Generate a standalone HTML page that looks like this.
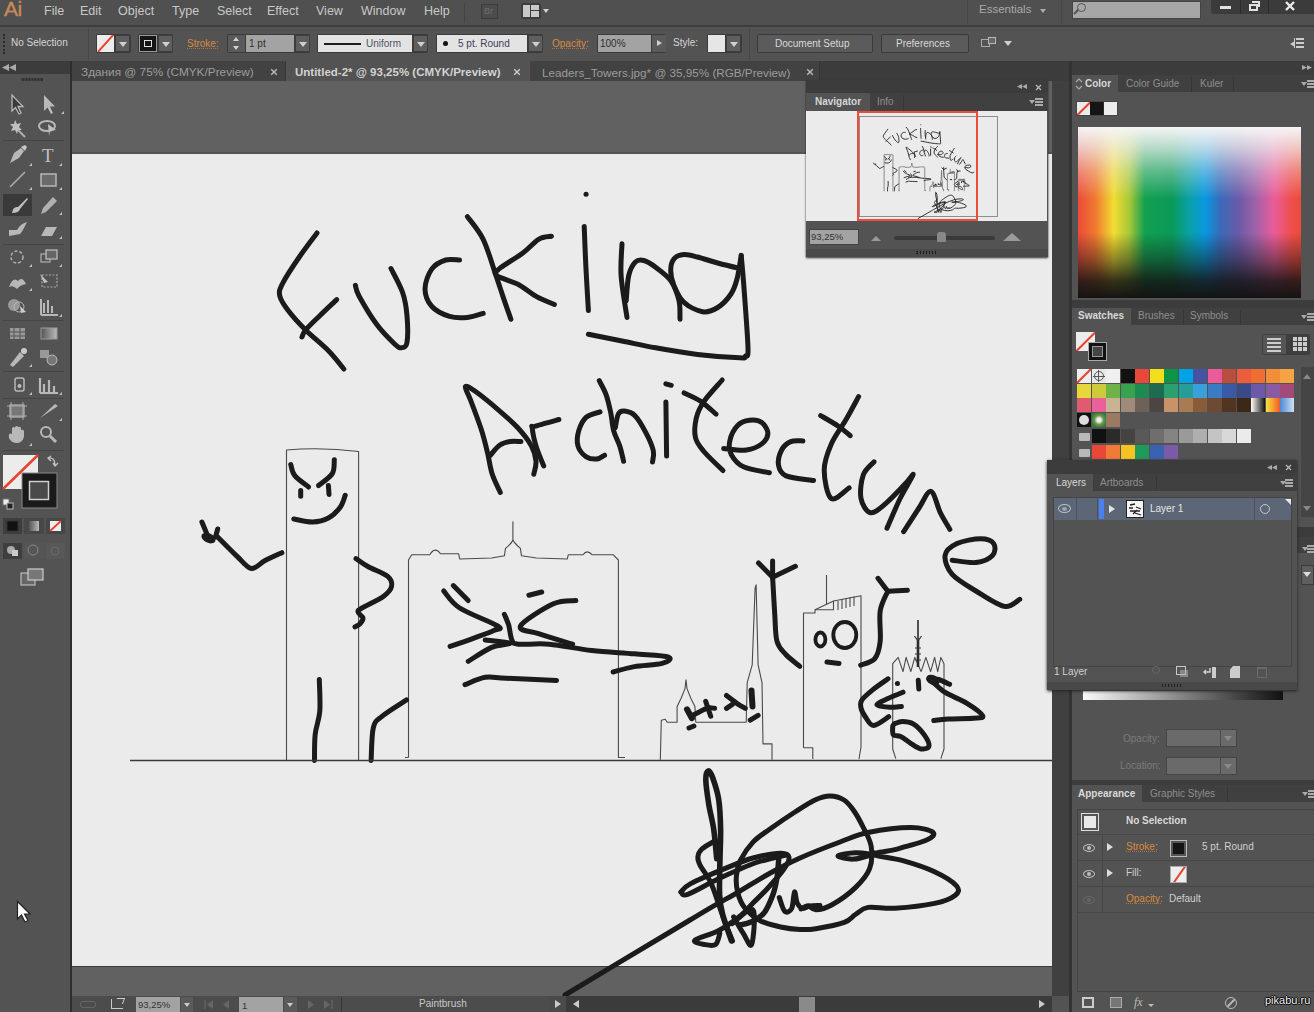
<!DOCTYPE html>
<html><head><meta charset="utf-8">
<style>
*{margin:0;padding:0;box-sizing:border-box}
html,body{width:1314px;height:1012px;overflow:hidden;background:#535353;font-family:"Liberation Sans",sans-serif;color:#cfcfcf}
.a{position:absolute}
.t{position:absolute;white-space:nowrap;line-height:1}
.menu{font-size:12.5px;color:#c8c8c8;top:5px}
.ctl{font-size:10px;color:#d8d8d8}
.or{color:#d98a3c;text-decoration:underline dotted #b0703a}
.dd{position:absolute;background:#5e5e5e;border:1px solid #3e3e3e}
.dd:after{content:"";position:absolute;left:50%;top:50%;margin-left:-4px;margin-top:-2px;border-left:4px solid transparent;border-right:4px solid transparent;border-top:5px solid #cfcfcf}
.tab{font-size:11px;color:#a8a8a8}
.ptab{font-size:10px;color:#9a9a9a}
.sw{position:absolute;width:14px;height:14px}
</style></head><body>
<!-- MENU BAR -->
<div class="a" style="left:0;top:0;width:1314px;height:26px;background:#505050"></div>
<div class="a" style="left:0;top:25px;width:1314px;height:2px;background:#3e3e3e"></div>
<div class="t" style="left:4px;top:-2px;font-size:21px;color:#c8895a;letter-spacing:-0.5px;-webkit-text-stroke:0.4px #c8895a">Ai</div>
<div class="t menu" style="left:44px">File</div>
<div class="t menu" style="left:80px">Edit</div>
<div class="t menu" style="left:118px">Object</div>
<div class="t menu" style="left:172px">Type</div>
<div class="t menu" style="left:217px">Select</div>
<div class="t menu" style="left:267px">Effect</div>
<div class="t menu" style="left:316px">View</div>
<div class="t menu" style="left:361px">Window</div>
<div class="t menu" style="left:424px">Help</div>


<div class="a" style="left:464px;top:3px;width:1px;height:20px;background:#444"></div>
<div class="a" style="left:481px;top:4px;width:17px;height:15px;border:1px solid #3d3d3d;background:#4c4c4c"></div>
<div class="t" style="left:484px;top:7px;font-size:9px;color:#6e6e6e">Br</div>
<div class="a" style="left:521px;top:3px;width:20px;height:16px;background:#3c3c3c;border-radius:2px"></div>
<div class="a" style="left:523px;top:5px;width:7px;height:12px;background:#c8c8c8"></div>
<div class="a" style="left:531px;top:5px;width:8px;height:5px;background:#c8c8c8"></div>
<div class="a" style="left:531px;top:11px;width:8px;height:6px;background:#c8c8c8"></div>
<div class="a" style="left:543px;top:9px;border-left:3.5px solid transparent;border-right:3.5px solid transparent;border-top:4px solid #d0d0d0"></div>
<div class="a" style="left:967px;top:0;width:1px;height:24px;background:#474747"></div>
<div class="t" style="left:979px;top:4px;font-size:11.5px;color:#a9a9a9">Essentials</div>
<div class="a" style="left:1040px;top:9px;border-left:3px solid transparent;border-right:3px solid transparent;border-top:4px solid #aaa"></div>
<div class="a" style="left:1061px;top:0;width:1px;height:24px;background:#474747"></div>
<div class="a" style="left:1072px;top:1px;width:129px;height:18px;background:#a7a7a7;border:1px solid #444"></div>
<div class="a" style="left:1077px;top:3px;width:9px;height:9px;border:1.5px solid #555;border-radius:50%"></div>
<div class="a" style="left:1073px;top:11px;width:6px;height:1.5px;background:#555;transform:rotate(-45deg)"></div>
<div class="a" style="left:1211px;top:0;width:103px;height:14px;background:#3b3b3b;border-radius:0 0 0 3px"></div>
<div class="a" style="left:1240px;top:0;width:1px;height:14px;background:#2c2c2c"></div>
<div class="a" style="left:1268px;top:0;width:1px;height:14px;background:#2c2c2c"></div>
<div class="a" style="left:1220px;top:6px;width:11px;height:3px;background:#e0e0e0"></div>
<div class="a" style="left:1249px;top:4px;width:9px;height:7px;border:2px solid #e0e0e0"></div>
<div class="a" style="left:1252px;top:1px;width:8px;height:6px;border:2px solid #e0e0e0;border-left:0;border-bottom:0"></div>
<svg class="a" style="left:1284px;top:0px" width="12" height="12"><path d="M2 2L10 10M10 2L2 10" stroke="#ececec" stroke-width="2.4"/></svg>

<!-- CONTROL BAR -->
<div class="a" style="left:0;top:27px;width:1314px;height:34px;background:#535353"></div>


<!-- control bar contents -->
<div class="a" style="left:3px;top:34px;width:2px;height:20px;border-left:2px dotted #2a2a2a"></div>
<div class="t ctl" style="left:11px;top:38px;font-size:10px;color:#d5d5d5">No Selection</div>
<div class="a" style="left:88px;top:28px;width:1px;height:32px;background:#474747"></div>
<div class="a" style="left:96px;top:34px;width:35px;height:19px;background:#3a3a3a;border-radius:2px"></div>
<div class="a" style="left:97px;top:35px;width:17px;height:17px;background:#ececec;overflow:hidden"><div class="a" style="left:-3px;top:7px;width:24px;height:2px;background:#e8412e;transform:rotate(-48deg)"></div></div>
<div class="dd" style="left:115px;top:35px;width:15px;height:17px"></div>
<div class="a" style="left:138px;top:34px;width:35px;height:19px;background:#3a3a3a;border-radius:2px"></div>
<div class="a" style="left:139px;top:35px;width:18px;height:17px;background:#151515;border:1px solid #9a9a9a"></div>
<div class="a" style="left:144px;top:40px;width:8px;height:7px;border:1.5px solid #e0e0e0"></div>
<div class="dd" style="left:158px;top:35px;width:15px;height:17px"></div>
<div class="t or" style="left:187px;top:39px;font-size:10px">Stroke:</div>
<div class="a" style="left:227px;top:34px;width:83px;height:19px;background:#3a3a3a;border-radius:2px"></div>
<div class="a" style="left:228px;top:35px;width:17px;height:17px;background:#5a5a5a"></div>
<div class="a" style="left:233px;top:37px;border-left:3.5px solid transparent;border-right:3.5px solid transparent;border-bottom:4px solid #cfcfcf"></div>
<div class="a" style="left:233px;top:46px;border-left:3.5px solid transparent;border-right:3.5px solid transparent;border-top:4px solid #cfcfcf"></div>
<div class="a" style="left:246px;top:35px;width:48px;height:17px;background:#a3a3a3"></div>
<div class="t" style="left:249px;top:39px;font-size:10px;color:#2e2e2e">1 pt</div>
<div class="dd" style="left:295px;top:35px;width:15px;height:17px"></div>
<div class="a" style="left:317px;top:34px;width:111px;height:19px;background:#3a3a3a;border-radius:2px"></div>
<div class="a" style="left:318px;top:35px;width:94px;height:17px;background:#e3e3e3"></div>
<div class="a" style="left:324px;top:43px;width:37px;height:2px;background:#1e1e1e"></div>
<div class="t" style="left:366px;top:39px;font-size:10px;color:#505468">Uniform</div>
<div class="dd" style="left:413px;top:35px;width:15px;height:17px"></div>
<div class="a" style="left:436px;top:34px;width:107px;height:19px;background:#3a3a3a;border-radius:2px"></div>
<div class="a" style="left:437px;top:35px;width:90px;height:17px;background:#e3e3e3"></div>
<div class="a" style="left:443px;top:41px;width:5px;height:5px;border-radius:50%;background:#111"></div>
<div class="t" style="left:458px;top:39px;font-size:10px;color:#3c3c58">5 pt. Round</div>
<div class="dd" style="left:528px;top:35px;width:15px;height:17px"></div>
<div class="t or" style="left:552px;top:39px;font-size:10px">Opacity:</div>
<div class="a" style="left:597px;top:34px;width:69px;height:19px;background:#3a3a3a;border-radius:2px"></div>
<div class="a" style="left:598px;top:35px;width:53px;height:17px;background:#a3a3a3"></div>
<div class="t" style="left:600px;top:39px;font-size:10px;color:#2e2e2e">100%</div>
<div class="a" style="left:652px;top:35px;width:14px;height:17px;background:#5a5a5a"></div>
<div class="a" style="left:657px;top:40px;border-top:3.5px solid transparent;border-bottom:3.5px solid transparent;border-left:5px solid #cfcfcf"></div>
<div class="t" style="left:673px;top:38px;font-size:10px;color:#d5d5d5">Style:</div>
<div class="a" style="left:707px;top:34px;width:35px;height:19px;background:#3a3a3a;border-radius:2px"></div>
<div class="a" style="left:708px;top:35px;width:17px;height:17px;background:#e6e6e6"></div>
<div class="dd" style="left:726px;top:35px;width:15px;height:17px"></div>
<div class="a" style="left:749px;top:28px;width:1px;height:32px;background:#474747"></div>
<div class="a" style="left:757px;top:34px;width:116px;height:19px;background:#5b5b5b;border:1px solid #3a3a3a;border-radius:2px"></div>
<div class="t" style="left:775px;top:39px;font-size:10px;color:#d8d8d8">Document Setup</div>
<div class="a" style="left:881px;top:34px;width:88px;height:19px;background:#5b5b5b;border:1px solid #3a3a3a;border-radius:2px"></div>
<div class="t" style="left:896px;top:39px;font-size:10px;color:#d8d8d8">Preferences</div>
<div class="a" style="left:981px;top:39px;width:9px;height:8px;border:1.5px solid #aaa"></div>
<div class="a" style="left:988px;top:37px;width:8px;height:7px;border:1.5px solid #bbb;background:#666"></div>
<div class="a" style="left:1004px;top:41px;border-left:4px solid transparent;border-right:4px solid transparent;border-top:5px solid #d0d0d0"></div>
<div class="a" style="left:1289px;top:43px;border-left:4px solid transparent;border-bottom:2.5px solid transparent;border-top:2.5px solid transparent;border-right:0 solid;width:0"></div>
<div class="a" style="left:1290px;top:41px;border-top:3px solid transparent;border-bottom:3px solid transparent;border-right:0;border-left:5px solid #ccc;transform:scaleX(-1)"></div>
<div class="a" style="left:1296px;top:38px;width:8px;height:2px;background:#ccc;box-shadow:0 4px 0 #ccc,0 8px 0 #ccc"></div>
<div class="a" style="left:1294px;top:38px;width:1px;height:10px;background:#ccc"></div>

<!-- TAB BAR -->
<div class="a" style="left:0;top:61px;width:1314px;height:20px;background:#3c3c3c"></div>


<svg class="a" style="left:2px;top:64px" width="14" height="7"><path d="M7 0L0 3.5L7 7ZM14 0L7 3.5L14 7Z" fill="#aaa"/></svg>
<div class="a" style="left:72px;top:61px;width:214px;height:20px;background:#424242;border-right:1px solid #363636"></div>
<div class="t tab" style="left:81px;top:67px;font-size:11.8px;color:#9c9c9c">&#x0417;&#x0434;&#x0430;&#x043D;&#x0438;&#x044F; @ 75% (CMYK/Preview)</div>
<svg class="a" style="left:270px;top:68px" width="8" height="8"><path d="M1.2 1.2L6.8 6.8M6.8 1.2L1.2 6.8" stroke="#bbb" stroke-width="1.4"/></svg>
<div class="a" style="left:286px;top:61px;width:244px;height:20px;background:#535353"></div>
<div class="t tab" style="left:295px;top:67px;font-size:11.5px;color:#d2d2d2;font-weight:bold">Untitled-2* @ 93,25% (CMYK/Preview)</div>
<svg class="a" style="left:513px;top:68px" width="8" height="8"><path d="M1.2 1.2L6.8 6.8M6.8 1.2L1.2 6.8" stroke="#ccc" stroke-width="1.4"/></svg>
<div class="a" style="left:530px;top:61px;width:290px;height:20px;background:#424242;border-right:1px solid #363636"></div>
<div class="t tab" style="left:542px;top:67px;font-size:11.7px;color:#9c9c9c">Leaders_Towers.jpg* @ 35,95% (RGB/Preview)</div>
<svg class="a" style="left:806px;top:68px" width="8" height="8"><path d="M1.2 1.2L6.8 6.8M6.8 1.2L1.2 6.8" stroke="#bbb" stroke-width="1.4"/></svg>

<!-- LEFT TOOLBAR -->
<div class="a" style="left:0;top:74px;width:70px;height:938px;background:#535353"></div>
<div class="a" style="left:70px;top:61px;width:2px;height:951px;background:#2e2e2e"></div>


<svg class="a" style="left:0;top:74px" width="70" height="520" viewBox="0 74 70 520">
<g fill="#222">
<rect x="21" y="78" width="22" height="3" fill="#2a2a2a" fill-opacity="0.85"/><path d="M22 78v3M25 78v3M28 78v3M31 78v3M34 78v3M37 78v3M40 78v3" stroke="#555" stroke-width="0.8"/>
</g>
<g stroke="#454545" stroke-width="1">
<path d="M3 140.5H64M3 244.5H64M3 320.5H64M3 371.5H64M3 398.5H64M3 450.5H64"/>
</g>
<rect x="3" y="194" width="29" height="22" fill="#3a3a3a"/>
<g fill="#c0c0c0" stroke="none">
<path d="M61 114l3-3 0 3zM29 166l3-3 0 3zM59 166l3-3 0 3zM29 190l3-3 0 3zM59 190l3-3 0 3zM59 215l3-3 0 3zM59 239l3-3 0 3zM29 267l3-3 0 3zM59 267l3-3 0 3zM29 291l3-3 0 3zM59 317l3-3 0 3zM29 367l3-3 0 3zM29 395l3-3 0 3zM59 395l3-3 0 3zM59 421l3-3 0 3zM29 446l3-3 0 3z"/>
</g>
<!-- selection -->
<path d="M12 95V111L15.5 107.5L19 114L21 113L18 106.5H23Z" fill="#3a3a3a" stroke="#b8b8b8" stroke-width="1.3"/>
<path d="M44 95V111L47.5 107.5L51 114L53 113L50 106.5H55Z" fill="#b8b8b8"/>
<!-- magic wand -->
<path d="M16 128L25 137" stroke="#b0b0b0" stroke-width="2"/>
<path d="M15 120l2 4 4-1-2 4 3 3-4 0-1 4-2-4-4 1 2-4-3-3 4 0z" fill="#c0c0c0"/>
<!-- lasso -->
<ellipse cx="47" cy="126" rx="8" ry="5" fill="none" stroke="#b8b8b8" stroke-width="2"/>
<path d="M48 124L56 130L50 131L49 136Z" fill="#c0c0c0"/>
<!-- pen -->
<path d="M10 163L14 153L21 148L24 151L19 158Z" fill="#b8b8b8"/><path d="M21 147l4-2 2 2-2 4z" fill="#c8c8c8"/>
<!-- Type -->
<text x="42" y="162" font-family="Liberation Serif" font-size="19" fill="#c0c0c0">T</text>
<!-- line -->
<path d="M10 187L25 172" stroke="#b0b0b0" stroke-width="1.5"/>
<!-- rect -->
<rect x="41" y="174" width="15" height="12" fill="#6a6a6a" stroke="#b8b8b8" stroke-width="1.5"/>
<!-- paintbrush -->
<path d="M12 213Q13 206 18 207L27 198L28 199L20 209Q19 213 12 213Z" fill="#c0c0c0"/>
<!-- pencil -->
<path d="M41 214L43 208L53 197L57 201L46 212Z" fill="#b0b0b0"/>
<!-- blob brush -->
<path d="M9 230H17Q20 224 27 222L25 226Q22 232 20 234L9 236Z" fill="#b8b8b8"/>
<!-- eraser -->
<path d="M41 236L46 227H57L52 236Z" fill="#b8b8b8"/>
<!-- rotate -->
<circle cx="17" cy="257" r="6" fill="none" stroke="#b0b0b0" stroke-width="1.5" stroke-dasharray="3 2"/>
<!-- scale -->
<rect x="41" y="254" width="9" height="8" fill="none" stroke="#b0b0b0" stroke-width="1.2"/><rect x="46" y="250" width="11" height="9" fill="#666" stroke="#c0c0c0" stroke-width="1.2"/>
<!-- warp -->
<path d="M9 287Q13 276 18 281Q22 276 26 284Q20 285 17 289Q13 285 9 287Z" fill="#b8b8b8"/>
<!-- free transform -->
<rect x="42" y="275" width="15" height="12" fill="none" stroke="#a8a8a8" stroke-width="1.2" stroke-dasharray="2 1.5"/><path d="M40 274L48 282L44 283Z" fill="#c0c0c0"/>
<!-- shape builder -->
<circle cx="14" cy="305" r="6" fill="#999"/><circle cx="19" cy="307" r="5" fill="none" stroke="#b8b8b8"/><path d="M20 306L26 312L21 313Z" fill="#ccc"/>
<!-- graph -->
<path d="M41 315V299M41 315H58M44 313V303M48 313V300M52 313V306" stroke="#b8b8b8" stroke-width="2"/>
<!-- mesh -->
<rect x="10" y="328" width="15" height="11" fill="#999"/><path d="M10 332H25M10 336H25M14 328V339M20 328V339" stroke="#555" stroke-width="1"/>
<!-- gradient -->
<defs><linearGradient id="tg" x1="0" x2="1"><stop offset="0" stop-color="#555"/><stop offset="1" stop-color="#bbb"/></linearGradient></defs>
<rect x="41" y="328" width="16" height="11" fill="url(#tg)" stroke="#999"/>
<!-- eyedropper -->
<path d="M10 365L20 352L24 356L13 367Z" fill="#b8b8b8"/><circle cx="24" cy="351" r="3" fill="#c8c8c8"/>
<!-- blend -->
<rect x="40" y="350" width="9" height="8" fill="#999"/><circle cx="52" cy="360" r="5" fill="#777" stroke="#bbb"/>
<!-- symbol sprayer -->
<rect x="15" y="378" width="9" height="13" rx="2" fill="none" stroke="#b8b8b8" stroke-width="1.5"/><circle cx="19.5" cy="386" r="2" fill="#bbb"/>
<!-- column graph -->
<path d="M40 393H58M40 393V378M44 392V384M49 392V380M54 392V386" stroke="#b8b8b8" stroke-width="2.2"/>
<!-- artboard -->
<rect x="10" y="405" width="14" height="12" fill="#777" stroke="#b8b8b8" stroke-width="1.2"/><path d="M7 406H27M7 416H27M11 402V420M23 402V420" stroke="#aaa" stroke-width="1"/>
<!-- slice -->
<path d="M40 418L55 404L58 406Z" fill="#b8b8b8"/>
<!-- hand -->
<path d="M9 438Q8 432 12 434V428Q14 426 15 428V427Q17 425 18 427Q20 426 21 428V430Q23 429 24 431V437Q22 443 17 443Q11 443 9 438Z" fill="#b8b8b8"/>
<!-- zoom -->
<circle cx="46" cy="432" r="5" fill="none" stroke="#b8b8b8" stroke-width="2"/><path d="M50 436L56 442" stroke="#b8b8b8" stroke-width="3"/>
<!-- fill/stroke -->
<rect x="3" y="455" width="35" height="34" fill="#ececec"/>
<path d="M3 489L38 455" stroke="#e8412e" stroke-width="2.5"/>
<path d="M48 458Q55 457 55 465M53 463L55 466L58 463M51 456L48 458L51 461" fill="none" stroke="#c0c0c0" stroke-width="1.4"/>
<rect x="22" y="473" width="35" height="35" fill="#1a1a1a" stroke="#8a8a8a" stroke-width="1"/>
<rect x="29.5" y="481.5" width="19" height="18" fill="#4a4a4a" stroke="#d0d0d0" stroke-width="1.5"/>
<rect x="3" y="499" width="6" height="6" fill="#eee" stroke="#777"/><rect x="7" y="503" width="6" height="6" fill="#222" stroke="#bbb"/>
<!-- mode row 1 -->
<rect x="3" y="518" width="19" height="16" fill="#3e3e3e"/><rect x="7" y="521" width="11" height="10" fill="#111" stroke="#333"/>
<rect x="24" y="518" width="20" height="16" fill="#474747"/><rect x="29" y="521" width="10" height="10" fill="url(#tg)"/>
<rect x="46" y="518" width="19" height="16" fill="#474747"/><rect x="50" y="521" width="11" height="10" fill="#eee"/><path d="M50 531L61 521" stroke="#e8412e" stroke-width="1.8"/>
<!-- draw modes -->
<rect x="3" y="543" width="19" height="16" fill="#3e3e3e"/><circle cx="11" cy="550" r="4" fill="#aaa"/><rect x="12" y="550" width="6" height="6" fill="#ccc"/>
<rect x="24" y="543" width="20" height="16" fill="#555"/><circle cx="33" cy="550" r="5" fill="none" stroke="#888"/>
<rect x="46" y="543" width="19" height="16" fill="#585858"/><circle cx="55" cy="551" r="4" fill="none" stroke="#6a6a6a"/>
<!-- screen mode -->
<rect x="21" y="573" width="14" height="12" fill="#666" stroke="#bbb" stroke-width="1.2"/><rect x="28" y="569" width="15" height="11" fill="#777" stroke="#ccc" stroke-width="1.2"/>
</svg>
<!-- cursor -->
<svg class="a" style="left:16px;top:900px" width="16" height="24"><path d="M1.5 1.5V19L5.5 15L9 22L12 20.5L8.5 14H14Z" fill="#fff" stroke="#222" stroke-width="1.2"/></svg>

<!-- PASTEBOARD + ARTBOARD -->
<div class="a" style="left:72px;top:81px;width:980px;height:915px;background:#616161"></div>
<div class="a" style="left:72px;top:152px;width:980px;height:2px;background:#535353"></div>
<div class="a" style="left:72px;top:154px;width:980px;height:812px;background:#ebebeb;box-shadow:0 1px 0 #3a3a3a"></div>

<svg class="a" style="left:0;top:0" width="1314" height="1012" viewBox="0 0 1314 1012">
<g fill="none" stroke="#4a4a4a" stroke-width="1.1" stroke-linejoin="round">
<path d="M286.5 760V450Q322 447 358.6 451.5V760"/>
<path d="M408.5 757.5H405M408.5 757.5V560L411.7 554.7H429.8Q435 546 440.5 553.7H458.6L459.7 559L491.6 558L504.4 555.8L505.5 548.4Q512 543 512.9 539.8V521.7V539.8Q514 543 520.4 548.4L521.5 555.8L536.4 558L567.3 559L568.3 554.7H583Q587 549 592 554.7H613.1L618.4 560V757.5H625"/>
<path d="M660.3 759.7L661.3 720.2L665.2 719.2L667.2 722.2H677.1V706.4L681 698.5L685 688.6L686 679.7L687 688.6L690.9 698.5L694.9 706.4L695.8 722.2H746.2L747.2 682.6L752.2 664.9L755.1 587.8L756.1 584.8L758.1 664.9L762 682.6L763 743.9H772V759.7"/>
<path d="M803.5 747.8V613H815V609.8L833.5 601L861 595.7V747L859 759M803.5 747.8H812.8V759M826.5 575V604.3"/>
<path d="M838 601V610M842 599V609M846 598V608M850 597V607M854 596.5V606M815 609.8H833.5V601"/>
<path d="M895.8 758.6L892.7 749V663.7L898.2 657.4L903 671.6L906.1 657.4L910.8 671.6L914.8 657.4L921.1 671.6L925.9 657.4L930.6 671.6L934.6 657.4L937.7 671.6L940.9 657.4L944 663.7V749L940.9 758.6"/>
</g>
<g fill="none" stroke="#1b1b1b" stroke-width="5" stroke-linecap="round" stroke-linejoin="round">
<path d="M317.0 233.0C314.2 236.8 305.8 247.6 300.0 256.0C294.2 264.4 285.9 276.9 282.5 283.6C279.1 290.3 278.9 291.6 279.8 296.0C280.7 300.4 283.5 304.3 287.8 310.0C292.1 315.7 298.8 323.2 305.6 330.0C312.4 336.8 322.3 344.5 328.7 351.0C335.1 357.5 341.3 366.0 343.8 369.0"/>
<path d="M336.7 299.6C333.9 302.3 325.0 310.6 319.8 315.7C314.6 320.8 308.6 326.4 305.6 330.0C302.6 333.6 302.6 335.8 302.0 337.0"/>
<path d="M355.4 285.4C356.0 287.2 355.4 289.5 359.0 296.0C362.6 302.5 370.9 316.6 376.8 324.6C382.7 332.6 390.5 340.1 394.6 344.0C398.8 347.9 399.6 348.0 401.7 347.7C403.8 347.4 406.1 347.6 407.0 342.3C407.9 337.0 407.7 324.0 407.0 315.7C406.3 307.4 405.3 300.4 402.6 292.5C399.9 284.6 392.9 272.5 391.0 268.5"/>
<path d="M459.5 260.0C457.2 260.0 450.3 258.5 445.7 260.0C441.1 261.5 435.3 264.1 431.9 268.9C428.4 273.7 425.0 282.4 425.0 288.7C425.0 295.0 427.8 301.9 431.9 306.5C436.0 311.1 443.7 314.6 449.6 316.4C455.5 318.2 461.8 317.9 467.4 317.4C473.0 316.9 480.6 314.1 483.2 313.4"/>
<path d="M467.4 216.6C470.0 220.4 478.6 229.9 483.2 239.3C487.8 248.7 491.8 263.3 495.1 272.9C498.4 282.4 500.4 288.9 503.0 296.6C505.6 304.3 509.6 315.5 510.9 319.3"/>
<path d="M551.4 236.3C549.3 236.8 543.4 236.5 538.6 239.3C533.8 242.1 529.4 248.2 522.8 253.1C516.2 258.1 503.3 265.2 499.0 269.0C494.7 272.8 493.7 273.2 497.0 275.8C500.3 278.4 512.2 281.2 518.8 284.7C525.4 288.2 530.7 293.3 536.6 296.6C542.5 299.9 551.4 303.2 554.4 304.5"/>
<path d="M586.0 194.2l0.1 0"/>
<path d="M584.2 226.4C584.5 233.2 585.2 253.2 585.9 267.2C586.6 281.2 588.0 303.4 588.4 310.6"/>
<path d="M622.0 243.7C621.9 249.0 620.3 263.3 621.1 275.6C621.9 287.9 626.0 310.5 627.0 317.5"/>
<path d="M626.2 300.8C626.6 296.6 627.2 282.1 628.7 275.6C630.2 269.2 632.9 264.6 635.4 262.1C637.9 259.6 640.4 259.6 643.8 260.5C647.2 261.4 651.1 263.8 655.6 267.2C660.1 270.6 666.8 275.0 670.7 280.6C674.6 286.2 677.5 294.4 679.0 300.8C680.5 307.2 679.8 316.1 680.0 319.2"/>
<path d="M737.8 268.0C734.4 267.2 724.4 264.8 717.7 263.0C711.0 261.2 703.1 258.4 697.5 257.0C691.9 255.6 687.9 254.3 684.0 254.6C680.1 254.9 676.2 256.2 674.0 258.8C671.8 261.4 670.7 266.0 670.7 270.5C670.7 275.0 671.8 280.3 674.0 285.6C676.2 290.9 679.2 298.0 684.0 302.4C688.8 306.8 697.0 310.8 702.6 311.7C708.2 312.6 713.0 310.4 717.7 307.5C722.4 304.6 727.8 298.8 731.0 294.0C734.2 289.2 735.3 285.4 737.0 279.0C738.7 272.6 740.5 259.3 741.2 255.4"/>
<path d="M741.2 255.4C741.6 260.2 742.6 268.6 743.7 284.0C744.8 299.4 747.7 335.8 748.0 347.8C748.3 359.8 746.8 354.5 745.4 356.2C744.0 357.9 747.5 358.1 739.5 357.8C731.5 357.5 711.5 356.2 697.5 354.5C683.5 352.8 668.2 350.1 655.6 347.8C643.0 345.6 633.2 343.2 622.0 341.0C610.8 338.8 594.0 335.4 588.4 334.3"/>
<path d="M500.3 492.5C498.9 489.3 494.1 480.2 492.0 473.5C489.9 466.8 489.2 459.6 487.4 452.2C485.6 444.8 484.1 438.0 481.3 429.4C478.5 420.8 473.4 407.5 470.7 400.4C468.0 393.3 464.6 388.2 465.3 386.7C466.1 385.2 469.8 387.5 475.2 391.3C480.6 395.1 490.9 403.5 498.0 409.6C505.1 415.7 512.2 421.7 517.8 427.8C523.4 433.9 528.5 440.5 531.5 446.1C534.5 451.7 535.6 456.6 536.0 461.3C536.4 466.0 534.2 472.1 533.8 474.3"/>
<path d="M490.4 455.2C491.9 453.6 496.3 447.6 499.6 445.3C502.9 443.0 506.6 442.1 510.2 441.5C513.8 440.9 519.1 441.5 520.9 441.5"/>
<path d="M543.7 465.9C542.4 462.6 538.0 452.5 536.1 446.1C534.2 439.8 532.5 431.1 532.3 427.8C532.0 424.5 530.2 427.7 534.6 426.3C539.0 424.9 554.9 420.6 558.9 419.5"/>
<path d="M600.0 411.9C597.7 412.8 589.8 414.0 586.3 417.2C582.8 420.4 580.1 426.1 578.7 430.9C577.3 435.7 576.7 441.8 578.0 446.1C579.3 450.4 583.1 454.7 586.3 456.8C589.5 458.9 594.0 459.3 597.0 459.0C600.0 458.7 603.3 455.8 604.6 455.2"/>
<path d="M599.3 380.7C600.4 383.0 604.1 389.1 606.0 394.4C607.9 399.7 609.4 406.5 610.7 412.6C612.0 418.7 612.2 425.3 613.7 430.9C615.2 436.5 618.1 441.0 619.8 446.1C621.4 451.2 623.0 458.8 623.6 461.3"/>
<path d="M615.3 427.8C615.8 425.5 616.8 416.9 618.3 414.1C619.8 411.3 621.6 410.8 624.4 411.1C627.2 411.4 631.5 412.1 635.0 415.7C638.5 419.2 642.7 426.6 645.7 432.4C648.8 438.2 652.2 445.8 653.3 450.7C654.4 455.6 652.6 460.1 652.5 462.0"/>
<path d="M665.9 383.8L671.2 385.3"/>
<path d="M665.9 402.0L666.6 456.1"/>
<path d="M684.1 392.9C686.9 394.3 695.6 397.8 700.9 401.3C706.2 404.9 713.6 412.1 716.1 414.2"/>
<path d="M722.2 380.0C719.2 383.6 708.3 395.0 704.0 401.3C699.7 407.6 697.7 411.9 696.3 418.0C694.9 424.1 694.2 432.2 695.5 437.8C696.8 443.4 699.3 446.0 703.9 451.5C708.5 457.0 719.8 467.4 723.0 470.6"/>
<path d="M723.7 448.5C727.5 448.8 740.1 450.8 746.5 450.0C752.9 449.2 758.2 446.7 761.8 443.9C765.4 441.1 767.9 436.9 767.9 433.3C767.9 429.8 764.8 424.8 761.8 422.6C758.8 420.4 753.7 419.8 749.6 420.3C745.5 420.8 740.7 422.3 737.4 425.7C734.1 429.1 730.8 436.1 729.8 440.9C728.8 445.7 729.0 450.3 731.3 454.6C733.6 458.9 737.1 463.8 743.5 466.8C749.9 469.8 765.1 471.8 769.4 472.8"/>
<path d="M802.9 440.9C800.9 441.0 794.2 440.1 790.7 441.6C787.2 443.1 783.6 446.1 781.6 450.0C779.6 453.9 777.8 460.9 778.5 465.2C779.2 469.5 780.3 473.3 786.1 475.9C791.9 478.4 808.9 479.7 813.5 480.5"/>
<path d="M820.7 415.6C823.7 417.4 833.5 422.9 838.4 426.2C843.3 429.5 848.3 434.1 850.3 435.7"/>
<path d="M858.6 396.6C856.4 400.6 850.2 412.4 845.6 420.3C841.0 428.2 834.9 435.7 831.3 444.0C827.7 452.3 824.2 461.0 824.2 470.1C824.2 479.2 827.1 495.5 831.3 498.5C835.4 501.5 846.1 489.7 849.1 487.9"/>
<path d="M874.0 461.8C872.2 464.0 865.5 468.7 863.3 474.8C861.1 480.9 859.8 492.2 861.0 498.5C862.2 504.8 866.4 512.0 870.5 512.8C874.6 513.6 880.2 508.1 885.9 503.3C891.6 498.6 900.3 489.1 904.8 484.3C909.3 479.6 913.9 472.4 913.1 474.8C912.3 477.2 904.5 489.6 900.1 498.5C895.8 507.4 889.2 523.2 887.0 528.2"/>
<path d="M903.6 531.7C906.2 527.8 914.5 514.7 919.0 508.0C923.5 501.3 927.3 490.6 930.9 491.4C934.5 492.2 937.2 506.5 940.4 512.8C943.6 519.1 948.3 526.6 949.9 529.4"/>
<path d="M952.2 560.2C956.2 560.6 969.3 563.3 976.0 562.5C982.7 561.7 989.5 558.5 992.5 555.4C995.5 552.2 995.7 546.4 993.7 543.6C991.7 540.8 986.8 538.8 980.7 538.8C974.6 538.8 962.9 540.8 957.0 543.6C951.1 546.4 945.9 550.3 945.1 555.4C944.3 560.5 947.1 568.5 952.2 574.4C957.4 580.3 967.3 585.7 976.0 591.0C984.7 596.3 997.1 605.0 1004.4 606.4C1011.7 607.8 1017.2 600.5 1019.8 599.3"/>
<path d="M290.8 464.7C291.5 466.5 291.8 471.9 294.8 475.6C297.8 479.3 306.3 485.1 308.6 487.0"/>
<path d="M334.3 459.8C334.0 462.1 334.9 469.3 332.3 473.6C329.7 477.9 320.8 483.5 318.5 485.5"/>
<path d="M300.7 490.4L300.7 496.3"/>
<path d="M328.4 485.5L329.0 494.4"/>
<path d="M293.8 519.0C296.9 519.5 306.8 522.2 312.6 522.0C318.4 521.8 323.8 520.5 328.4 518.0C333.0 515.5 337.4 511.0 340.2 507.2C343.0 503.4 344.4 497.3 345.2 495.3"/>
<path d="M281.9 552.7C279.1 554.0 270.2 558.0 265.1 560.6C260.0 563.2 255.9 569.2 251.3 568.5C246.7 567.8 243.0 561.9 237.4 556.6C231.8 551.3 221.0 540.2 217.7 536.9"/>
<path d="M201.9 522.0L206.5 533.0"/>
<path d="M217.7 529.0L215.5 537.0"/>
<path d="M356.0 558.6C358.0 559.9 362.6 563.5 367.9 566.5C373.2 569.5 383.8 573.1 387.7 576.4C391.6 579.7 392.3 583.0 391.6 586.3C390.9 589.6 388.6 592.6 383.7 596.2C378.8 599.8 366.3 605.4 362.0 608.0C357.7 610.6 357.8 610.3 358.0 612.0C358.2 613.7 362.7 616.0 363.0 618.0C363.3 620.0 361.3 622.3 360.0 623.8C358.7 625.3 355.8 626.3 355.0 626.8"/>
<path d="M319.3 679.4C319.4 684.7 320.5 702.2 319.8 711.3C319.1 720.4 316.1 726.0 315.2 734.2C314.3 742.4 314.6 756.0 314.5 760.4"/>
<path d="M406.5 699.9C402.5 702.6 388.1 711.3 382.6 715.9C377.1 720.5 375.3 719.9 373.4 727.3C371.5 734.7 371.5 754.9 371.1 760.4"/>
<path d="M443.7 591.0C446.4 593.8 450.6 602.1 459.7 608.0C468.8 613.9 492.3 622.4 498.0 626.1C503.7 629.8 497.7 628.5 493.8 630.4C489.9 632.3 481.9 635.1 474.6 637.8C467.3 640.5 454.2 645.0 450.1 646.4"/>
<path d="M453.3 585.6L468.2 600.6"/>
<path d="M528.9 595.2L541.7 592.0"/>
<path d="M575.8 600.6C572.1 601.1 562.6 599.5 553.4 603.8C544.2 608.0 522.9 621.1 520.4 626.1C517.9 631.1 529.8 630.6 538.5 633.6C547.2 636.6 566.9 642.4 572.6 644.2"/>
<path d="M504.4 614.4C505.1 616.2 507.4 620.7 508.7 625.0C509.9 629.3 510.3 636.8 511.9 640.0C513.5 643.2 512.1 643.5 518.3 644.2C524.5 644.9 537.0 643.1 549.2 644.2C561.5 645.3 577.6 649.0 591.8 650.6C606.0 652.2 621.6 652.7 634.4 653.8C647.2 654.9 663.9 655.4 668.5 657.0C673.1 658.6 667.8 661.8 662.1 663.4C656.4 665.0 642.6 665.2 634.4 666.6C626.2 668.0 616.6 671.1 613.1 672.0"/>
<path d="M485.2 640.0C489.3 640.5 508.6 642.0 509.7 643.2C510.8 644.4 498.5 644.4 491.6 647.4C484.7 650.4 472.1 659.0 468.2 661.3"/>
<path d="M465.0 684.7C468.4 683.5 478.3 678.4 485.2 677.3C492.1 676.2 494.6 677.8 506.5 678.3C518.4 678.8 548.2 680.1 556.6 680.5"/>
<path d="M687.0 709.3L691.9 718.2" stroke-width="6"/>
<path d="M692.9 715.3C695.2 714.1 703.1 709.5 706.7 708.3C710.3 707.1 713.3 708.3 714.6 708.3"/>
<path d="M705.7 701.4L710.7 716.2"/>
<path d="M689.0 728.0L693.9 726.0"/>
<path d="M726.5 695.5C728.5 697.0 735.2 702.3 738.3 704.4C741.4 706.5 744.1 707.6 745.3 708.3"/>
<path d="M726.5 708.3L732.4 704.4"/>
<path d="M751.5 690.6L752.5 706.4" stroke-width="6"/>
<path d="M750.2 720.2L758.1 715.3"/>
<path d="M758.5 563.0L772.6 577.2"/>
<path d="M772.6 560.9L772.6 577.2"/>
<path d="M795.4 566.3L772.6 577.2"/>
<path d="M772.6 577.2C773.0 583.5 774.1 604.5 774.8 615.2C775.5 625.9 775.2 634.8 777.0 641.3C778.8 647.8 781.8 650.1 785.6 654.3C789.4 658.5 797.4 664.3 799.8 666.3"/>
<path d="M878.0 578.3L887.8 591.3"/>
<path d="M907.4 590.2L887.8 591.3"/>
<path d="M860.7 665.2C863.1 664.1 871.5 662.7 874.8 658.7C878.0 654.7 879.3 649.3 880.2 641.3C881.1 633.3 878.9 619.2 880.2 610.9C881.5 602.6 886.5 594.6 887.8 591.3"/>
<path d="M827.0 662.0L839.0 663.5"/>
<path d="M897.4 683.5l0.1 0"/>
<path d="M918.3 680.3L918.8 689.0" stroke-width="5"/>
<path d="M929.0 678.0C930.6 678.2 935.1 678.5 938.5 679.5C941.9 680.5 947.8 683.5 949.6 684.3"/>
<path d="M930.0 679.0L934.0 682.0" stroke-width="7"/>
<path d="M930.6 679.5C933.0 681.6 938.7 688.2 944.8 692.2C950.9 696.2 960.7 699.3 967.0 703.3C973.3 707.2 981.8 713.4 982.8 715.9C983.8 718.4 979.1 717.8 973.3 718.3C967.5 718.8 954.6 718.6 948.0 719.0C941.4 719.4 936.2 720.3 933.8 720.6"/>
<path d="M903.0 692.2C900.5 693.2 892.4 696.4 888.0 698.5C883.6 700.6 876.6 703.3 876.9 704.8C877.1 706.2 885.4 706.9 889.5 707.2C893.6 707.5 899.4 706.5 901.4 706.4"/>
<path d="M888.0 678.8C885.6 680.5 878.1 685.5 873.7 689.0C869.4 692.5 864.0 696.8 861.9 700.0C859.8 703.2 860.4 705.1 861.0 708.0C861.6 710.9 863.7 714.6 865.8 717.5C867.9 720.4 869.9 725.5 873.7 725.4C877.5 725.3 886.2 718.2 888.7 716.7"/>
<path d="M894.3 723.8C895.6 723.4 899.1 721.4 902.2 721.4C905.4 721.4 909.5 721.5 913.2 723.8C916.9 726.0 921.7 731.2 924.3 734.9C926.9 738.6 929.5 743.5 929.0 745.9C928.5 748.2 924.3 749.5 921.1 749.0C917.9 748.5 913.4 744.9 910.0 742.8C906.6 740.7 903.4 737.7 900.6 736.4C897.9 735.1 894.8 736.5 893.5 734.9C892.2 733.3 892.6 728.9 892.7 727.0C892.8 725.1 894.0 724.3 894.3 723.8"/>
<path d="M716.7 858.8C716.2 853.9 715.0 838.2 713.7 829.2C712.4 820.2 710.1 812.7 708.8 804.5C707.5 796.3 705.9 785.4 705.8 779.8C705.7 774.2 707.1 771.2 708.3 770.9C709.4 770.6 711.0 773.0 712.7 777.8C714.4 782.6 717.4 790.9 718.7 799.5C720.0 808.1 720.4 819.5 720.6 829.2C720.8 839.0 720.2 847.1 720.0 858.0C719.8 868.9 719.2 885.1 719.6 894.5C720.0 903.9 720.6 906.5 722.6 914.2C724.6 921.9 730.0 936.5 731.5 940.9" stroke-width="5.6"/>
<path d="M714.7 841.0C712.6 842.3 704.7 846.4 701.9 849.0C699.1 851.6 698.2 854.2 697.9 856.8C697.6 859.4 697.8 860.5 699.9 864.8C702.0 869.1 707.7 876.0 710.8 882.6C713.9 889.2 716.4 897.9 718.7 904.3C721.0 910.7 722.3 915.0 724.6 921.1C726.9 927.2 731.2 937.6 732.5 940.9"/>
<path d="M681.0 892.0C682.6 890.6 683.3 887.5 690.7 883.6C698.1 879.7 714.9 872.7 725.3 868.4C735.7 864.1 743.8 860.5 753.0 858.0C762.2 855.5 774.6 853.3 780.6 853.2C786.6 853.1 788.5 854.5 789.0 857.3C789.5 860.1 787.1 864.5 783.4 869.8C779.7 875.1 771.9 883.7 766.8 889.2C761.7 894.7 757.6 898.4 753.0 903.0C748.4 907.6 745.0 912.2 739.2 916.8C733.4 921.4 725.8 926.8 718.4 930.7C711.0 934.6 697.2 938.0 694.9 940.3C692.6 942.6 701.1 943.8 704.6 944.5C708.1 945.2 713.1 946.4 715.6 944.5C718.1 942.6 719.1 935.2 719.8 933.4"/>
<path d="M681.0 892.0C682.1 892.4 681.4 896.6 687.7 894.4C694.0 892.2 707.8 883.8 719.0 878.6C730.2 873.4 743.8 866.9 755.0 863.0C766.2 859.1 780.8 856.3 786.0 855.0"/>
<path d="M565.0 995.0C580.8 985.5 639.2 950.5 660.0 938.0C680.8 925.5 680.9 925.5 690.0 920.0C699.1 914.5 706.5 910.0 714.7 905.3C722.9 900.5 730.4 896.8 739.4 891.5C748.4 886.2 758.9 879.3 769.0 873.7C779.1 868.1 788.2 863.3 800.0 858.0C811.8 852.7 828.7 846.2 840.0 842.0C851.3 837.8 856.2 834.9 868.0 832.5C879.8 830.1 900.0 827.5 910.8 827.5C921.6 827.5 930.3 830.1 932.9 832.2C935.5 834.3 932.9 837.2 926.6 840.1C920.3 843.0 903.9 847.2 894.9 849.6C885.9 852.0 871.5 852.5 872.8 854.4C874.1 856.2 892.5 857.8 902.8 860.7C913.1 863.6 925.5 867.6 934.5 871.8C943.5 876.0 953.2 882.0 956.6 886.0C960.0 890.0 958.7 892.6 955.0 895.5C951.3 898.4 944.5 901.3 934.5 903.4C924.5 905.5 906.1 907.5 895.0 908.2C883.9 908.9 874.6 906.4 868.0 907.4C861.4 908.4 859.4 912.0 855.4 914.5C851.4 917.0 850.9 920.0 844.3 922.4C837.7 924.8 823.2 927.5 815.8 928.7C808.4 929.9 805.9 929.8 800.0 929.5C794.1 929.2 787.3 928.5 780.6 927.0C773.9 925.5 765.9 923.8 759.9 920.6C753.9 917.4 748.4 912.4 744.7 907.8C741.0 903.2 739.2 898.3 737.8 893.0C736.4 887.7 735.9 881.5 736.4 876.0C736.9 870.5 737.7 865.8 740.5 860.1C743.3 854.5 748.1 847.3 753.0 842.1C757.9 836.9 763.0 834.0 770.0 829.0C777.0 824.0 787.5 816.8 795.0 812.0C802.5 807.2 809.2 802.7 815.0 800.0C820.8 797.3 825.2 796.0 830.0 796.0C834.8 796.0 840.0 797.5 844.0 800.0C848.0 802.5 850.8 806.4 854.0 811.0C857.2 815.6 860.4 821.6 863.3 827.5C866.2 833.4 870.2 839.6 871.2 846.5C872.2 853.4 872.2 861.8 869.6 868.6C867.0 875.5 861.7 881.5 855.4 887.6C849.1 893.7 838.2 901.3 831.6 905.0C825.0 908.7 819.8 909.6 815.8 909.7C811.8 909.8 810.4 905.9 807.9 905.8C805.4 905.7 802.1 908.5 801.0 909.0"/>
<path d="M778.9 856.0C778.6 859.6 778.0 871.3 777.0 877.7C776.0 884.1 775.2 888.6 773.0 894.5C770.8 900.4 767.7 908.4 764.0 913.0C760.3 917.6 755.1 920.0 751.0 922.0C746.9 924.0 741.2 924.6 739.2 925.1" stroke-width="5.4"/>
<path d="M779.3 897.5C780.2 899.8 782.7 909.5 784.8 911.3C786.9 913.1 790.1 911.7 791.7 908.5C793.3 905.3 793.6 892.8 794.5 891.9C795.4 891.0 795.8 900.2 797.2 903.0C798.6 905.8 800.7 908.0 802.8 908.5C804.9 909.0 807.1 906.5 810.0 906.0C812.9 905.5 818.3 905.6 820.0 905.5"/>
<path d="M732.2 923.7C735.7 921.4 749.8 906.4 753.0 909.9C756.2 913.4 753.2 940.6 751.6 944.5C750.0 948.4 746.3 938.0 743.3 933.4C740.3 928.8 735.2 919.6 733.6 916.8"/>
<path d="M872.8 854.4C869.9 854.1 861.2 852.5 855.4 852.8C849.6 853.0 838.3 854.8 838.0 855.9C837.7 857.0 848.0 859.4 853.8 859.1C859.6 858.9 869.6 855.2 872.8 854.4"/>
</g>
<ellipse cx="933" cy="680" rx="7" ry="4.8" transform="rotate(25 933 680)" fill="#1b1b1b"/>
<path d="M130 760.5H1052" stroke="#3a3a3a" stroke-width="1.6"/>
<path d="M918 620V667" stroke="#2a2a2a" stroke-width="1.6" fill="none"/><path d="M918 640V667" stroke="#2a2a2a" stroke-width="2.6" fill="none"/><path d="M914.5 636L918 641L921.5 636M915 648H921M915 654H921M915 660H921" stroke="#333" stroke-width="1.2" fill="none"/>
<ellipse cx="208.5" cy="538" rx="7.5" ry="4.8" transform="rotate(25 208.5 538)" fill="#1b1b1b"/>
<ellipse cx="820.4" cy="639.5" rx="5" ry="7" fill="none" stroke="#1b1b1b" stroke-width="3.8"/>
<ellipse cx="844.8" cy="635" rx="11.5" ry="13" fill="none" stroke="#1b1b1b" stroke-width="3.8"/>
</svg>

<!-- SCROLLBAR -->
<div class="a" style="left:1056px;top:89px;border-left:5px solid transparent;border-right:5px solid transparent;border-bottom:7px solid #d0d0d0"></div>
<div class="a" style="left:1056px;top:983px;border-left:5px solid transparent;border-right:5px solid transparent;border-top:7px solid #d0d0d0"></div>
<div class="a" style="left:1052px;top:996px;width:17px;height:16px;background:#535353"></div>

<div class="a" style="left:1052px;top:81px;width:17px;height:915px;background:#404040"></div>
<div class="a" style="left:1069px;top:61px;width:3px;height:951px;background:#333"></div>

<!-- STATUS BAR -->
<div class="a" style="left:72px;top:996px;width:980px;height:16px;background:#3e3e3e"></div>
<div class="a" style="left:72px;top:996px;width:494px;height:16px;background:#4c4c4c"></div>
<div class="a" style="left:80px;top:1001px;width:16px;height:7px;border:1.3px solid #666;border-radius:3px"></div>
<div class="a" style="left:111px;top:999px;width:12px;height:10px;border:1.5px solid #c8c8c8;border-top:0;border-right:0"></div>
<div class="a" style="left:116px;top:998px;width:8px;height:6px;border-top:1.8px solid #ccc;border-right:1.8px solid #ccc;transform:skewX(-20deg)"></div>
<div class="a" style="left:136px;top:997px;width:44px;height:15px;background:#a3a3a3"></div>
<div class="t" style="left:138px;top:1000px;font-size:9.5px;color:#333">93,25%</div>
<div class="a" style="left:181px;top:997px;width:12px;height:15px;background:#5a5a5a"></div>
<div class="a" style="left:184px;top:1003px;border-left:3.5px solid transparent;border-right:3.5px solid transparent;border-top:4px solid #ccc"></div>
<svg class="a" style="left:204px;top:1000px" width="26" height="9"><path d="M1 0V9" stroke="#666" stroke-width="1.2"/><path d="M9 0L3 4.5L9 9ZM25 0L19 4.5L25 9Z" fill="#666"/></svg>
<div class="a" style="left:239px;top:997px;width:44px;height:15px;background:#a3a3a3"></div>
<div class="t" style="left:242px;top:1001px;font-size:9.5px;color:#333">1</div>
<div class="a" style="left:284px;top:997px;width:13px;height:15px;background:#5a5a5a"></div>
<div class="a" style="left:287px;top:1003px;border-left:3.5px solid transparent;border-right:3.5px solid transparent;border-top:4px solid #ccc"></div>
<svg class="a" style="left:307px;top:1000px" width="26" height="9"><path d="M25 0V9" stroke="#666" stroke-width="1.2"/><path d="M1 0L7 4.5L1 9ZM17 0L23 4.5L17 9Z" fill="#666"/></svg>
<div class="a" style="left:341px;top:997px;width:1px;height:15px;background:#363636"></div>
<div class="t" style="left:419px;top:999px;font-size:10px;color:#c8c8c8">Paintbrush</div>
<div class="a" style="left:549px;top:996px;width:17px;height:16px;background:#4a4a4a"></div>
<div class="a" style="left:555px;top:1000px;border-top:4px solid transparent;border-bottom:4px solid transparent;border-left:6px solid #ccc"></div>
<div class="a" style="left:566px;top:996px;width:486px;height:16px;background:#3b3b3b"></div>
<div class="a" style="left:573px;top:1000px;border-top:4.5px solid transparent;border-bottom:4.5px solid transparent;border-right:6px solid #ccc"></div>
<div class="a" style="left:799px;top:997px;width:16px;height:15px;background:#8a8a8a"></div>
<div class="a" style="left:1039px;top:1000px;border-top:4.5px solid transparent;border-bottom:4.5px solid transparent;border-left:6px solid #ccc"></div>


<!-- RIGHT DOCK -->
<div class="a" style="left:1072px;top:61px;width:242px;height:951px;background:#535353"></div>
<div class="a" style="left:1072px;top:61px;width:242px;height:14px;background:#3c3c3c"></div>
<svg class="a" style="left:1302px;top:65px" width="10" height="5"><path d="M0 0L5 2.5L0 5ZM5 0L10 2.5L5 5Z" fill="#aaa"/></svg>
<!-- color panel -->
<div class="a" style="left:1072px;top:75px;width:242px;height:17px;background:#404040"></div>
<div class="a" style="left:1072px;top:75px;width:46px;height:17px;background:#535353"></div>
<svg class="a" style="left:1075px;top:78px" width="8" height="12"><path d="M1 4L4 1L7 4M1 8L4 11L7 8" stroke="#aaa" stroke-width="1.2" fill="none"/></svg>
<div class="t ptab" style="left:1085px;top:79px;font-size:10px;color:#d8d8d8;font-weight:bold">Color</div>
<div class="t ptab" style="left:1126px;top:79px;font-size:10px;color:#8e8e8e">Color Guide</div>
<div class="a" style="left:1191px;top:77px;width:1px;height:15px;background:#363636"></div>
<div class="t ptab" style="left:1200px;top:79px;font-size:10px;color:#8e8e8e">Kuler</div>
<div class="a" style="left:1233px;top:77px;width:1px;height:15px;background:#363636"></div>
<div class="a" style="left:1301px;top:82px;border-left:3px solid transparent;border-right:3px solid transparent;border-top:4px solid #aaa"></div>
<div class="a" style="left:1307px;top:80px;width:7px;height:1.5px;background:#aaa;box-shadow:0 3px 0 #aaa,0 6px 0 #aaa"></div>
<div class="a" style="left:1076px;top:101px;width:42px;height:15px;background:#2a2a2a;border:1px solid #444"></div>
<div class="a" style="left:1077px;top:102px;width:13px;height:13px;background:#ececec;overflow:hidden"><div class="a" style="left:-3px;top:5.5px;width:19px;height:2px;background:#e8412e;transform:rotate(-45deg)"></div></div>
<div class="a" style="left:1090px;top:102px;width:13px;height:13px;background:#151515"></div>
<div class="a" style="left:1104px;top:102px;width:13px;height:13px;background:#ececec"></div>
<div class="a" style="left:1078px;top:127px;width:223px;height:171px;background:linear-gradient(90deg,#ec4a3a 0%,#f07a30 8%,#f2dc30 16%,#a8c838 23%,#12a050 30%,#0a9a58 42%,#0aa0a8 50%,#0898e0 57%,#3a6ab8 64%,#6a5aa8 72%,#9a62a8 79%,#ea5c9a 88%,#ee4e48 96%,#ec4a3a 100%)">
 <div class="a" style="left:0;top:0;width:223px;height:171px;background:linear-gradient(180deg,rgba(245,245,245,1) 0%,rgba(240,240,240,0.75) 12%,rgba(240,240,240,0.35) 26%,rgba(240,240,240,0) 42%,rgba(20,20,20,0) 62%,rgba(20,20,20,0.45) 78%,rgba(20,20,20,0.85) 90%,rgba(20,20,20,1) 100%)"></div>
</div>
<div class="a" style="left:1072px;top:300px;width:242px;height:8px;background:#3c3c3c"></div>
<!-- swatches panel -->
<div class="a" style="left:1072px;top:308px;width:242px;height:17px;background:#404040"></div>
<div class="a" style="left:1072px;top:308px;width:59px;height:17px;background:#535353"></div>
<div class="t ptab" style="left:1078px;top:311px;font-size:10px;color:#d8d8d8;font-weight:bold">Swatches</div>
<div class="t ptab" style="left:1138px;top:311px;font-size:10px;color:#8e8e8e">Brushes</div>
<div class="a" style="left:1183px;top:310px;width:1px;height:15px;background:#363636"></div>
<div class="t ptab" style="left:1190px;top:311px;font-size:10px;color:#8e8e8e">Symbols</div>
<div class="a" style="left:1240px;top:310px;width:1px;height:15px;background:#363636"></div>
<div class="a" style="left:1301px;top:315px;border-left:3px solid transparent;border-right:3px solid transparent;border-top:4px solid #aaa"></div>
<div class="a" style="left:1307px;top:313px;width:7px;height:1.5px;background:#aaa;box-shadow:0 3px 0 #aaa,0 6px 0 #aaa"></div>
<div class="a" style="left:1076px;top:332px;width:19px;height:19px;background:#ececec;overflow:hidden"><div class="a" style="left:-4px;top:8.5px;width:27px;height:2px;background:#e8412e;transform:rotate(-45deg)"></div></div>
<div class="a" style="left:1088px;top:342px;width:19px;height:19px;background:#111;border:1px solid #aaa"></div>
<div class="a" style="left:1092px;top:346px;width:11px;height:11px;background:#444;border:1px solid #999"></div>
<div class="a" style="left:1262px;top:334px;width:48px;height:21px;background:#3e3e3e;border-radius:2px"></div>
<div class="a" style="left:1263px;top:335px;width:23px;height:19px;background:#555"></div>
<div class="a" style="left:1267px;top:338px;width:14px;height:2px;background:#ccc;box-shadow:0 4px 0 #ccc,0 8px 0 #ccc,0 12px 0 #ccc"></div>
<div class="a" style="left:1293px;top:337px;width:4px;height:4px;background:#ccc;box-shadow:5px 0 0 #ccc,10px 0 0 #ccc,0 5px 0 #ccc,5px 5px 0 #ccc,10px 5px 0 #ccc,0 10px 0 #ccc,5px 10px 0 #ccc,10px 10px 0 #ccc"></div>
<div class="a" style="left:1077.0px;top:369px;width:14px;height:14px;background:#eee;overflow:hidden"><div class="a" style="left:-3px;top:6px;width:20px;height:2px;background:#e8412e;transform:rotate(-45deg)"></div></div>
<div class="a" style="left:1091.5px;top:369px;width:14px;height:14px;background:#e8e8e8"><div class="a" style="left:2px;top:2px;width:10px;height:10px;border:1px solid #555;border-radius:50%"></div><div class="a" style="left:6.5px;top:1px;width:1px;height:12px;background:#555"></div><div class="a" style="left:1px;top:6.5px;width:12px;height:1px;background:#555"></div></div>
<div class="a" style="left:1106.0px;top:369px;width:14px;height:14px;background:#f0f0f0"></div>
<div class="a" style="left:1120.5px;top:369px;width:14px;height:14px;background:#111111"></div>
<div class="a" style="left:1135.0px;top:369px;width:14px;height:14px;background:#e8473a"></div>
<div class="a" style="left:1149.5px;top:369px;width:14px;height:14px;background:#f3de1e"></div>
<div class="a" style="left:1164.0px;top:369px;width:14px;height:14px;background:#0f9447"></div>
<div class="a" style="left:1178.5px;top:369px;width:14px;height:14px;background:#00a3e3"></div>
<div class="a" style="left:1193.0px;top:369px;width:14px;height:14px;background:#4652a2"></div>
<div class="a" style="left:1207.5px;top:369px;width:14px;height:14px;background:#ea5b9c"></div>
<div class="a" style="left:1222.0px;top:369px;width:14px;height:14px;background:#b94d3e"></div>
<div class="a" style="left:1236.5px;top:369px;width:14px;height:14px;background:#ec5d3f"></div>
<div class="a" style="left:1251.0px;top:369px;width:14px;height:14px;background:#ef6c32"></div>
<div class="a" style="left:1265.5px;top:369px;width:14px;height:14px;background:#f28d39"></div>
<div class="a" style="left:1280.0px;top:369px;width:14px;height:14px;background:#f5a443"></div>
<div class="a" style="left:1077.0px;top:383.5px;width:14px;height:14px;background:#e8d73a"></div>
<div class="a" style="left:1091.5px;top:383.5px;width:14px;height:14px;background:#cdcb3b"></div>
<div class="a" style="left:1106.0px;top:383.5px;width:14px;height:14px;background:#6fb24a"></div>
<div class="a" style="left:1120.5px;top:383.5px;width:14px;height:14px;background:#38a24f"></div>
<div class="a" style="left:1135.0px;top:383.5px;width:14px;height:14px;background:#1f8a4f"></div>
<div class="a" style="left:1149.5px;top:383.5px;width:14px;height:14px;background:#1f6a50"></div>
<div class="a" style="left:1164.0px;top:383.5px;width:14px;height:14px;background:#2aa071"></div>
<div class="a" style="left:1178.5px;top:383.5px;width:14px;height:14px;background:#279d98"></div>
<div class="a" style="left:1193.0px;top:383.5px;width:14px;height:14px;background:#38a0da"></div>
<div class="a" style="left:1207.5px;top:383.5px;width:14px;height:14px;background:#3a7cc3"></div>
<div class="a" style="left:1222.0px;top:383.5px;width:14px;height:14px;background:#3a5aa8"></div>
<div class="a" style="left:1236.5px;top:383.5px;width:14px;height:14px;background:#3a4a88"></div>
<div class="a" style="left:1251.0px;top:383.5px;width:14px;height:14px;background:#6b5aa8"></div>
<div class="a" style="left:1265.5px;top:383.5px;width:14px;height:14px;background:#8a5aa2"></div>
<div class="a" style="left:1280.0px;top:383.5px;width:14px;height:14px;background:#a24a7a"></div>
<div class="a" style="left:1077.0px;top:398px;width:14px;height:14px;background:#e05a70"></div>
<div class="a" style="left:1091.5px;top:398px;width:14px;height:14px;background:#ea619a"></div>
<div class="a" style="left:1106.0px;top:398px;width:14px;height:14px;background:#c8b395"></div>
<div class="a" style="left:1120.5px;top:398px;width:14px;height:14px;background:#a08a7a"></div>
<div class="a" style="left:1135.0px;top:398px;width:14px;height:14px;background:#6d615a"></div>
<div class="a" style="left:1149.5px;top:398px;width:14px;height:14px;background:#4d4542"></div>
<div class="a" style="left:1164.0px;top:398px;width:14px;height:14px;background:#c9936a"></div>
<div class="a" style="left:1178.5px;top:398px;width:14px;height:14px;background:#a87b52"></div>
<div class="a" style="left:1193.0px;top:398px;width:14px;height:14px;background:#8a5b3b"></div>
<div class="a" style="left:1207.5px;top:398px;width:14px;height:14px;background:#6e4a33"></div>
<div class="a" style="left:1222.0px;top:398px;width:14px;height:14px;background:#513523"></div>
<div class="a" style="left:1236.5px;top:398px;width:14px;height:14px;background:#3b2817"></div>
<div class="a" style="left:1251.0px;top:398px;width:14px;height:14px;background:linear-gradient(90deg,#fff,#111)"></div>
<div class="a" style="left:1265.5px;top:398px;width:14px;height:14px;background:linear-gradient(90deg,#f6e43a,#ef5a2a)"></div>
<div class="a" style="left:1280.0px;top:398px;width:14px;height:14px;background:linear-gradient(90deg,#4a8ad8,#cfe0f0)"></div>
<div class="a" style="left:1077.0px;top:412.5px;width:14px;height:14px;background:#111"><div class="a" style="left:2px;top:2px;width:10px;height:10px;border-radius:50%;background:#ddd"></div></div>
<div class="a" style="left:1091.5px;top:412.5px;width:14px;height:14px;background:radial-gradient(circle,#eee 20%,#6a9a4a 45%,#2f7a3a 80%)"></div>
<div class="a" style="left:1106.0px;top:412.5px;width:14px;height:14px;background:#9a7a62"></div>
<div class="a" style="left:1079.0px;top:433px;width:11px;height:8px;background:#b8b8b8;border-radius:1px"></div>
<div class="a" style="left:1091.5px;top:429px;width:14px;height:14px;background:#111111"></div>
<div class="a" style="left:1106.0px;top:429px;width:14px;height:14px;background:#2b2b2b"></div>
<div class="a" style="left:1120.5px;top:429px;width:14px;height:14px;background:#454341"></div>
<div class="a" style="left:1135.0px;top:429px;width:14px;height:14px;background:#5a5858"></div>
<div class="a" style="left:1149.5px;top:429px;width:14px;height:14px;background:#6f6d6d"></div>
<div class="a" style="left:1164.0px;top:429px;width:14px;height:14px;background:#858383"></div>
<div class="a" style="left:1178.5px;top:429px;width:14px;height:14px;background:#9a9a9a"></div>
<div class="a" style="left:1193.0px;top:429px;width:14px;height:14px;background:#afafaf"></div>
<div class="a" style="left:1207.5px;top:429px;width:14px;height:14px;background:#c4c4c4"></div>
<div class="a" style="left:1222.0px;top:429px;width:14px;height:14px;background:#d8d8d8"></div>
<div class="a" style="left:1236.5px;top:429px;width:14px;height:14px;background:#ebebeb"></div>
<div class="a" style="left:1079.0px;top:449px;width:11px;height:8px;background:#b8b8b8;border-radius:1px"></div>
<div class="a" style="left:1091.5px;top:445px;width:14px;height:14px;background:#e8473a"></div>
<div class="a" style="left:1106.0px;top:445px;width:14px;height:14px;background:#f07a38"></div>
<div class="a" style="left:1120.5px;top:445px;width:14px;height:14px;background:#f5c322"></div>
<div class="a" style="left:1135.0px;top:445px;width:14px;height:14px;background:#1f9a5a"></div>
<div class="a" style="left:1149.5px;top:445px;width:14px;height:14px;background:#3a62b2"></div>
<div class="a" style="left:1164.0px;top:445px;width:14px;height:14px;background:#7b5ba8"></div>
<div class="a" style="left:1301px;top:367px;width:13px;height:150px;background:#454545"></div>
<div class="a" style="left:1303px;top:506px;border-left:4px solid transparent;border-right:4px solid transparent;border-top:5px solid #888"></div>
<div class="a" style="left:1303px;top:374px;border-left:4px solid transparent;border-right:4px solid transparent;border-bottom:5px solid #888"></div>
<!-- gradient panel remnant (behind layers) -->
<div class="a" style="left:1072px;top:527px;width:242px;height:10px;background:#3c3c3c"></div>
<div class="a" style="left:1072px;top:537px;width:242px;height:16px;background:#404040"></div>
<div class="a" style="left:1302px;top:547px;border-left:3px solid transparent;border-right:3px solid transparent;border-top:4px solid #aaa"></div>
<div class="a" style="left:1307px;top:545px;width:7px;height:1.5px;background:#aaa;box-shadow:0 3px 0 #aaa,0 6px 0 #aaa"></div>
<div class="a" style="left:1301px;top:565px;width:13px;height:20px;background:#5e5e5e;border:1px solid #3a3a3a"></div>
<div class="a" style="left:1303px;top:572px;border-left:4px solid transparent;border-right:4px solid transparent;border-top:5px solid #ddd"></div>
<div class="a" style="left:1083px;top:691px;width:200px;height:9px;background:linear-gradient(90deg,#fafafa,#777 55%,#111)"></div>
<div class="t" style="left:1123px;top:734px;font-size:10px;color:#7a7a7a">Opacity:</div>
<div class="a" style="left:1166px;top:729px;width:71px;height:18px;background:#6a6a6a;border:1px solid #454545"></div>
<div class="a" style="left:1220px;top:730px;width:1px;height:16px;background:#4a4a4a"></div>
<div class="a" style="left:1224px;top:736px;border-left:4px solid transparent;border-right:4px solid transparent;border-top:5px solid #8a8a8a"></div>
<div class="t" style="left:1120px;top:761px;font-size:10px;color:#7a7a7a">Location:</div>
<div class="a" style="left:1166px;top:757px;width:71px;height:18px;background:#6a6a6a;border:1px solid #454545"></div>
<div class="a" style="left:1220px;top:758px;width:1px;height:16px;background:#4a4a4a"></div>
<div class="a" style="left:1224px;top:764px;border-left:4px solid transparent;border-right:4px solid transparent;border-top:5px solid #8a8a8a"></div>
<div class="a" style="left:1072px;top:780px;width:242px;height:5px;background:#3c3c3c"></div>
<!-- appearance -->
<div class="a" style="left:1072px;top:785px;width:242px;height:17px;background:#404040"></div>
<div class="a" style="left:1072px;top:785px;width:70px;height:17px;background:#535353"></div>
<div class="t ptab" style="left:1078px;top:789px;font-size:10px;color:#d8d8d8;font-weight:bold">Appearance</div>
<div class="t ptab" style="left:1150px;top:789px;font-size:10px;color:#8e8e8e">Graphic Styles</div>
<div class="a" style="left:1227px;top:787px;width:1px;height:15px;background:#363636"></div>
<div class="a" style="left:1302px;top:792px;border-left:3px solid transparent;border-right:3px solid transparent;border-top:4px solid #aaa"></div>
<div class="a" style="left:1308px;top:790px;width:6px;height:1.5px;background:#aaa;box-shadow:0 3px 0 #aaa,0 6px 0 #aaa"></div>
<div class="a" style="left:1077px;top:809px;width:237px;height:183px;border:1px solid #444;border-right:0"></div>
<div class="a" style="left:1078px;top:834px;width:236px;height:1px;background:#474747"></div>
<div class="a" style="left:1078px;top:860px;width:236px;height:1px;background:#474747"></div>
<div class="a" style="left:1078px;top:886px;width:236px;height:1px;background:#474747"></div>
<div class="a" style="left:1078px;top:912px;width:236px;height:1px;background:#474747"></div>
<div class="a" style="left:1102px;top:835px;width:1px;height:77px;background:#474747"></div>
<div class="a" style="left:1081px;top:813px;width:18px;height:18px;border:1.5px solid #ddd;background:#555"></div>
<div class="a" style="left:1084px;top:816px;width:12px;height:12px;background:#e8e8e8"></div>
<div class="t" style="left:1126px;top:816px;font-size:10px;color:#d8d8d8;font-weight:bold">No Selection</div>
<div class="a" style="left:1083px;top:844px;width:12px;height:8px;border:1.5px solid #bbb;border-radius:50%"></div><div class="a" style="left:1087px;top:846px;width:4px;height:4px;background:#bbb;border-radius:50%"></div>
<div class="a" style="left:1107px;top:843px;border-top:4px solid transparent;border-bottom:4px solid transparent;border-left:6px solid #ddd"></div>
<div class="t or" style="left:1126px;top:842px;font-size:10px">Stroke:</div>
<div class="a" style="left:1170px;top:840px;width:17px;height:17px;background:#555;border:1px solid #bbb"></div>
<div class="a" style="left:1173px;top:843px;width:11px;height:11px;background:#151515"></div>
<div class="t" style="left:1202px;top:842px;font-size:10px;color:#d0d0d0">5 pt. Round</div>
<div class="a" style="left:1083px;top:870px;width:12px;height:8px;border:1.5px solid #bbb;border-radius:50%"></div><div class="a" style="left:1087px;top:872px;width:4px;height:4px;background:#bbb;border-radius:50%"></div>
<div class="a" style="left:1107px;top:869px;border-top:4px solid transparent;border-bottom:4px solid transparent;border-left:6px solid #ddd"></div>
<div class="t" style="left:1126px;top:868px;font-size:10px;color:#d0d0d0">Fill:</div>
<div class="a" style="left:1170px;top:866px;width:17px;height:17px;background:#eee;border:1px solid #aaa;overflow:hidden"><div class="a" style="left:-3px;top:6.5px;width:22px;height:1.6px;background:#e8412e;transform:rotate(-55deg)"></div></div>
<div class="a" style="left:1083px;top:896px;width:12px;height:8px;border:1.5px solid #666;border-radius:50%"></div><div class="a" style="left:1087px;top:898px;width:4px;height:4px;background:#666;border-radius:50%"></div>
<div class="t or" style="left:1126px;top:894px;font-size:10px">Opacity:</div>
<div class="t" style="left:1169px;top:894px;font-size:10px;color:#d0d0d0">Default</div>
<div class="a" style="left:1082px;top:997px;width:12px;height:11px;border:2px solid #ccc"></div>
<div class="a" style="left:1110px;top:997px;width:12px;height:11px;background:#777;border:1px solid #aaa"></div>
<div class="t" style="left:1134px;top:996px;font-size:12px;color:#bbb;font-style:italic;font-family:'Liberation Serif',serif">fx</div>
<div class="a" style="left:1148px;top:1004px;border-left:3px solid transparent;border-right:3px solid transparent;border-top:3px solid #bbb"></div>
<div class="a" style="left:1225px;top:997px;width:12px;height:12px;border:1.6px solid #bbb;border-radius:50%"></div>
<div class="a" style="left:1226px;top:1002px;width:10px;height:1.6px;background:#bbb;transform:rotate(-45deg)"></div>
<div class="t" style="left:1265px;top:995px;font-size:11px;color:#f4f4f4;text-shadow:1px 0 0 #000,-1px 0 0 #000,0 1px 0 #000,0 -1px 0 #000">pikabu.ru</div>




<!-- NAVIGATOR -->
<div class="a" style="left:806px;top:80px;width:242px;height:177px;background:#535353;box-shadow:0 1px 2px #2a2a2a"></div>
<div class="a" style="left:806px;top:80px;width:242px;height:13px;background:#3c3c3c"></div>
<svg class="a" style="left:1017px;top:84px" width="10" height="5"><path d="M5 0L0 2.5L5 5ZM10 0L5 2.5L10 5Z" fill="#aaa"/></svg>
<svg class="a" style="left:1034.5px;top:83.5px" width="7.0" height="7.0"><path d="M1 1L6.0 6.0M6.0 1L1 6.0" stroke="#bbb" stroke-width="1.2"/></svg>
<div class="a" style="left:806px;top:93px;width:242px;height:18px;background:#404040"></div>
<div class="a" style="left:806px;top:93px;width:64px;height:18px;background:#535353"></div>
<div class="t ptab" style="left:815px;top:97px;font-size:10px;color:#d6d6d6;font-weight:bold">Navigator</div>
<div class="t ptab" style="left:877px;top:97px;font-size:10px;color:#8e8e8e">Info</div>
<div class="a" style="left:903px;top:95px;width:1px;height:16px;background:#363636"></div>
<div class="a" style="left:1029px;top:100px;border-left:3px solid transparent;border-right:3px solid transparent;border-top:4px solid #aaa"></div>
<div class="a" style="left:1035px;top:98px;width:8px;height:1.5px;background:#aaa;box-shadow:0 3px 0 #aaa,0 6px 0 #aaa"></div>
<div class="a" style="left:806px;top:111px;width:241px;height:110px;background:#ebebeb;overflow:hidden">
 <div class="a" style="left:53px;top:5px;width:139px;height:101px;border:1.5px solid #8e8e8e"></div>
 <div class="a" style="left:51px;top:0;width:121px;height:110px;border:2px solid #ee4b39"></div>
 <svg class="a" style="left:0;top:0" width="241" height="110" viewBox="806 111 241 110">
 <g transform="translate(849 102) scale(0.1225 0.117)" fill="none" stroke="#2a2a2a" stroke-width="8" stroke-linecap="round">
 <path d="M317.0 233.0C314.2 236.8 305.8 247.6 300.0 256.0C294.2 264.4 285.9 276.9 282.5 283.6C279.1 290.3 278.9 291.6 279.8 296.0C280.7 300.4 283.5 304.3 287.8 310.0C292.1 315.7 298.8 323.2 305.6 330.0C312.4 336.8 322.3 344.5 328.7 351.0C335.1 357.5 341.3 366.0 343.8 369.0"/>
<path d="M336.7 299.6C333.9 302.3 325.0 310.6 319.8 315.7C314.6 320.8 308.6 326.4 305.6 330.0C302.6 333.6 302.6 335.8 302.0 337.0"/>
<path d="M355.4 285.4C356.0 287.2 355.4 289.5 359.0 296.0C362.6 302.5 370.9 316.6 376.8 324.6C382.7 332.6 390.5 340.1 394.6 344.0C398.8 347.9 399.6 348.0 401.7 347.7C403.8 347.4 406.1 347.6 407.0 342.3C407.9 337.0 407.7 324.0 407.0 315.7C406.3 307.4 405.3 300.4 402.6 292.5C399.9 284.6 392.9 272.5 391.0 268.5"/>
<path d="M459.5 260.0C457.2 260.0 450.3 258.5 445.7 260.0C441.1 261.5 435.3 264.1 431.9 268.9C428.4 273.7 425.0 282.4 425.0 288.7C425.0 295.0 427.8 301.9 431.9 306.5C436.0 311.1 443.7 314.6 449.6 316.4C455.5 318.2 461.8 317.9 467.4 317.4C473.0 316.9 480.6 314.1 483.2 313.4"/>
<path d="M467.4 216.6C470.0 220.4 478.6 229.9 483.2 239.3C487.8 248.7 491.8 263.3 495.1 272.9C498.4 282.4 500.4 288.9 503.0 296.6C505.6 304.3 509.6 315.5 510.9 319.3"/>
<path d="M551.4 236.3C549.3 236.8 543.4 236.5 538.6 239.3C533.8 242.1 529.4 248.2 522.8 253.1C516.2 258.1 503.3 265.2 499.0 269.0C494.7 272.8 493.7 273.2 497.0 275.8C500.3 278.4 512.2 281.2 518.8 284.7C525.4 288.2 530.7 293.3 536.6 296.6C542.5 299.9 551.4 303.2 554.4 304.5"/>
<path d="M586.0 194.2l0.1 0"/>
<path d="M584.2 226.4C584.5 233.2 585.2 253.2 585.9 267.2C586.6 281.2 588.0 303.4 588.4 310.6"/>
<path d="M622.0 243.7C621.9 249.0 620.3 263.3 621.1 275.6C621.9 287.9 626.0 310.5 627.0 317.5"/>
<path d="M626.2 300.8C626.6 296.6 627.2 282.1 628.7 275.6C630.2 269.2 632.9 264.6 635.4 262.1C637.9 259.6 640.4 259.6 643.8 260.5C647.2 261.4 651.1 263.8 655.6 267.2C660.1 270.6 666.8 275.0 670.7 280.6C674.6 286.2 677.5 294.4 679.0 300.8C680.5 307.2 679.8 316.1 680.0 319.2"/>
<path d="M737.8 268.0C734.4 267.2 724.4 264.8 717.7 263.0C711.0 261.2 703.1 258.4 697.5 257.0C691.9 255.6 687.9 254.3 684.0 254.6C680.1 254.9 676.2 256.2 674.0 258.8C671.8 261.4 670.7 266.0 670.7 270.5C670.7 275.0 671.8 280.3 674.0 285.6C676.2 290.9 679.2 298.0 684.0 302.4C688.8 306.8 697.0 310.8 702.6 311.7C708.2 312.6 713.0 310.4 717.7 307.5C722.4 304.6 727.8 298.8 731.0 294.0C734.2 289.2 735.3 285.4 737.0 279.0C738.7 272.6 740.5 259.3 741.2 255.4"/>
<path d="M741.2 255.4C741.6 260.2 742.6 268.6 743.7 284.0C744.8 299.4 747.7 335.8 748.0 347.8C748.3 359.8 746.8 354.5 745.4 356.2C744.0 357.9 747.5 358.1 739.5 357.8C731.5 357.5 711.5 356.2 697.5 354.5C683.5 352.8 668.2 350.1 655.6 347.8C643.0 345.6 633.2 343.2 622.0 341.0C610.8 338.8 594.0 335.4 588.4 334.3"/>
<path d="M500.3 492.5C498.9 489.3 494.1 480.2 492.0 473.5C489.9 466.8 489.2 459.6 487.4 452.2C485.6 444.8 484.1 438.0 481.3 429.4C478.5 420.8 473.4 407.5 470.7 400.4C468.0 393.3 464.6 388.2 465.3 386.7C466.1 385.2 469.8 387.5 475.2 391.3C480.6 395.1 490.9 403.5 498.0 409.6C505.1 415.7 512.2 421.7 517.8 427.8C523.4 433.9 528.5 440.5 531.5 446.1C534.5 451.7 535.6 456.6 536.0 461.3C536.4 466.0 534.2 472.1 533.8 474.3"/>
<path d="M490.4 455.2C491.9 453.6 496.3 447.6 499.6 445.3C502.9 443.0 506.6 442.1 510.2 441.5C513.8 440.9 519.1 441.5 520.9 441.5"/>
<path d="M543.7 465.9C542.4 462.6 538.0 452.5 536.1 446.1C534.2 439.8 532.5 431.1 532.3 427.8C532.0 424.5 530.2 427.7 534.6 426.3C539.0 424.9 554.9 420.6 558.9 419.5"/>
<path d="M600.0 411.9C597.7 412.8 589.8 414.0 586.3 417.2C582.8 420.4 580.1 426.1 578.7 430.9C577.3 435.7 576.7 441.8 578.0 446.1C579.3 450.4 583.1 454.7 586.3 456.8C589.5 458.9 594.0 459.3 597.0 459.0C600.0 458.7 603.3 455.8 604.6 455.2"/>
<path d="M599.3 380.7C600.4 383.0 604.1 389.1 606.0 394.4C607.9 399.7 609.4 406.5 610.7 412.6C612.0 418.7 612.2 425.3 613.7 430.9C615.2 436.5 618.1 441.0 619.8 446.1C621.4 451.2 623.0 458.8 623.6 461.3"/>
<path d="M615.3 427.8C615.8 425.5 616.8 416.9 618.3 414.1C619.8 411.3 621.6 410.8 624.4 411.1C627.2 411.4 631.5 412.1 635.0 415.7C638.5 419.2 642.7 426.6 645.7 432.4C648.8 438.2 652.2 445.8 653.3 450.7C654.4 455.6 652.6 460.1 652.5 462.0"/>
<path d="M665.9 383.8L671.2 385.3"/>
<path d="M665.9 402.0L666.6 456.1"/>
<path d="M684.1 392.9C686.9 394.3 695.6 397.8 700.9 401.3C706.2 404.9 713.6 412.1 716.1 414.2"/>
<path d="M722.2 380.0C719.2 383.6 708.3 395.0 704.0 401.3C699.7 407.6 697.7 411.9 696.3 418.0C694.9 424.1 694.2 432.2 695.5 437.8C696.8 443.4 699.3 446.0 703.9 451.5C708.5 457.0 719.8 467.4 723.0 470.6"/>
<path d="M723.7 448.5C727.5 448.8 740.1 450.8 746.5 450.0C752.9 449.2 758.2 446.7 761.8 443.9C765.4 441.1 767.9 436.9 767.9 433.3C767.9 429.8 764.8 424.8 761.8 422.6C758.8 420.4 753.7 419.8 749.6 420.3C745.5 420.8 740.7 422.3 737.4 425.7C734.1 429.1 730.8 436.1 729.8 440.9C728.8 445.7 729.0 450.3 731.3 454.6C733.6 458.9 737.1 463.8 743.5 466.8C749.9 469.8 765.1 471.8 769.4 472.8"/>
<path d="M802.9 440.9C800.9 441.0 794.2 440.1 790.7 441.6C787.2 443.1 783.6 446.1 781.6 450.0C779.6 453.9 777.8 460.9 778.5 465.2C779.2 469.5 780.3 473.3 786.1 475.9C791.9 478.4 808.9 479.7 813.5 480.5"/>
<path d="M820.7 415.6C823.7 417.4 833.5 422.9 838.4 426.2C843.3 429.5 848.3 434.1 850.3 435.7"/>
<path d="M858.6 396.6C856.4 400.6 850.2 412.4 845.6 420.3C841.0 428.2 834.9 435.7 831.3 444.0C827.7 452.3 824.2 461.0 824.2 470.1C824.2 479.2 827.1 495.5 831.3 498.5C835.4 501.5 846.1 489.7 849.1 487.9"/>
<path d="M874.0 461.8C872.2 464.0 865.5 468.7 863.3 474.8C861.1 480.9 859.8 492.2 861.0 498.5C862.2 504.8 866.4 512.0 870.5 512.8C874.6 513.6 880.2 508.1 885.9 503.3C891.6 498.6 900.3 489.1 904.8 484.3C909.3 479.6 913.9 472.4 913.1 474.8C912.3 477.2 904.5 489.6 900.1 498.5C895.8 507.4 889.2 523.2 887.0 528.2"/>
<path d="M903.6 531.7C906.2 527.8 914.5 514.7 919.0 508.0C923.5 501.3 927.3 490.6 930.9 491.4C934.5 492.2 937.2 506.5 940.4 512.8C943.6 519.1 948.3 526.6 949.9 529.4"/>
<path d="M952.2 560.2C956.2 560.6 969.3 563.3 976.0 562.5C982.7 561.7 989.5 558.5 992.5 555.4C995.5 552.2 995.7 546.4 993.7 543.6C991.7 540.8 986.8 538.8 980.7 538.8C974.6 538.8 962.9 540.8 957.0 543.6C951.1 546.4 945.9 550.3 945.1 555.4C944.3 560.5 947.1 568.5 952.2 574.4C957.4 580.3 967.3 585.7 976.0 591.0C984.7 596.3 997.1 605.0 1004.4 606.4C1011.7 607.8 1017.2 600.5 1019.8 599.3"/>
<path d="M290.8 464.7C291.5 466.5 291.8 471.9 294.8 475.6C297.8 479.3 306.3 485.1 308.6 487.0"/>
<path d="M334.3 459.8C334.0 462.1 334.9 469.3 332.3 473.6C329.7 477.9 320.8 483.5 318.5 485.5"/>
<path d="M300.7 490.4L300.7 496.3"/>
<path d="M328.4 485.5L329.0 494.4"/>
<path d="M293.8 519.0C296.9 519.5 306.8 522.2 312.6 522.0C318.4 521.8 323.8 520.5 328.4 518.0C333.0 515.5 337.4 511.0 340.2 507.2C343.0 503.4 344.4 497.3 345.2 495.3"/>
<path d="M281.9 552.7C279.1 554.0 270.2 558.0 265.1 560.6C260.0 563.2 255.9 569.2 251.3 568.5C246.7 567.8 243.0 561.9 237.4 556.6C231.8 551.3 221.0 540.2 217.7 536.9"/>
<path d="M201.9 522.0L206.5 533.0"/>
<path d="M217.7 529.0L215.5 537.0"/>
<path d="M356.0 558.6C358.0 559.9 362.6 563.5 367.9 566.5C373.2 569.5 383.8 573.1 387.7 576.4C391.6 579.7 392.3 583.0 391.6 586.3C390.9 589.6 388.6 592.6 383.7 596.2C378.8 599.8 366.3 605.4 362.0 608.0C357.7 610.6 357.8 610.3 358.0 612.0C358.2 613.7 362.7 616.0 363.0 618.0C363.3 620.0 361.3 622.3 360.0 623.8C358.7 625.3 355.8 626.3 355.0 626.8"/>
<path d="M319.3 679.4C319.4 684.7 320.5 702.2 319.8 711.3C319.1 720.4 316.1 726.0 315.2 734.2C314.3 742.4 314.6 756.0 314.5 760.4"/>
<path d="M406.5 699.9C402.5 702.6 388.1 711.3 382.6 715.9C377.1 720.5 375.3 719.9 373.4 727.3C371.5 734.7 371.5 754.9 371.1 760.4"/>
<path d="M443.7 591.0C446.4 593.8 450.6 602.1 459.7 608.0C468.8 613.9 492.3 622.4 498.0 626.1C503.7 629.8 497.7 628.5 493.8 630.4C489.9 632.3 481.9 635.1 474.6 637.8C467.3 640.5 454.2 645.0 450.1 646.4"/>
<path d="M453.3 585.6L468.2 600.6"/>
<path d="M528.9 595.2L541.7 592.0"/>
<path d="M575.8 600.6C572.1 601.1 562.6 599.5 553.4 603.8C544.2 608.0 522.9 621.1 520.4 626.1C517.9 631.1 529.8 630.6 538.5 633.6C547.2 636.6 566.9 642.4 572.6 644.2"/>
<path d="M504.4 614.4C505.1 616.2 507.4 620.7 508.7 625.0C509.9 629.3 510.3 636.8 511.9 640.0C513.5 643.2 512.1 643.5 518.3 644.2C524.5 644.9 537.0 643.1 549.2 644.2C561.5 645.3 577.6 649.0 591.8 650.6C606.0 652.2 621.6 652.7 634.4 653.8C647.2 654.9 663.9 655.4 668.5 657.0C673.1 658.6 667.8 661.8 662.1 663.4C656.4 665.0 642.6 665.2 634.4 666.6C626.2 668.0 616.6 671.1 613.1 672.0"/>
<path d="M485.2 640.0C489.3 640.5 508.6 642.0 509.7 643.2C510.8 644.4 498.5 644.4 491.6 647.4C484.7 650.4 472.1 659.0 468.2 661.3"/>
<path d="M465.0 684.7C468.4 683.5 478.3 678.4 485.2 677.3C492.1 676.2 494.6 677.8 506.5 678.3C518.4 678.8 548.2 680.1 556.6 680.5"/>
<path d="M687.0 709.3L691.9 718.2"/>
<path d="M692.9 715.3C695.2 714.1 703.1 709.5 706.7 708.3C710.3 707.1 713.3 708.3 714.6 708.3"/>
<path d="M705.7 701.4L710.7 716.2"/>
<path d="M689.0 728.0L693.9 726.0"/>
<path d="M726.5 695.5C728.5 697.0 735.2 702.3 738.3 704.4C741.4 706.5 744.1 707.6 745.3 708.3"/>
<path d="M726.5 708.3L732.4 704.4"/>
<path d="M751.5 690.6L752.5 706.4"/>
<path d="M750.2 720.2L758.1 715.3"/>
<path d="M758.5 563.0L772.6 577.2"/>
<path d="M772.6 560.9L772.6 577.2"/>
<path d="M795.4 566.3L772.6 577.2"/>
<path d="M772.6 577.2C773.0 583.5 774.1 604.5 774.8 615.2C775.5 625.9 775.2 634.8 777.0 641.3C778.8 647.8 781.8 650.1 785.6 654.3C789.4 658.5 797.4 664.3 799.8 666.3"/>
<path d="M878.0 578.3L887.8 591.3"/>
<path d="M907.4 590.2L887.8 591.3"/>
<path d="M860.7 665.2C863.1 664.1 871.5 662.7 874.8 658.7C878.0 654.7 879.3 649.3 880.2 641.3C881.1 633.3 878.9 619.2 880.2 610.9C881.5 602.6 886.5 594.6 887.8 591.3"/>
<path d="M827.0 662.0L839.0 663.5"/>
<path d="M897.4 683.5l0.1 0"/>
<path d="M918.3 680.3L918.8 689.0"/>
<path d="M929.0 678.0C930.6 678.2 935.1 678.5 938.5 679.5C941.9 680.5 947.8 683.5 949.6 684.3"/>
<path d="M930.0 679.0L934.0 682.0"/>
<path d="M930.6 679.5C933.0 681.6 938.7 688.2 944.8 692.2C950.9 696.2 960.7 699.3 967.0 703.3C973.3 707.2 981.8 713.4 982.8 715.9C983.8 718.4 979.1 717.8 973.3 718.3C967.5 718.8 954.6 718.6 948.0 719.0C941.4 719.4 936.2 720.3 933.8 720.6"/>
<path d="M903.0 692.2C900.5 693.2 892.4 696.4 888.0 698.5C883.6 700.6 876.6 703.3 876.9 704.8C877.1 706.2 885.4 706.9 889.5 707.2C893.6 707.5 899.4 706.5 901.4 706.4"/>
<path d="M888.0 678.8C885.6 680.5 878.1 685.5 873.7 689.0C869.4 692.5 864.0 696.8 861.9 700.0C859.8 703.2 860.4 705.1 861.0 708.0C861.6 710.9 863.7 714.6 865.8 717.5C867.9 720.4 869.9 725.5 873.7 725.4C877.5 725.3 886.2 718.2 888.7 716.7"/>
<path d="M894.3 723.8C895.6 723.4 899.1 721.4 902.2 721.4C905.4 721.4 909.5 721.5 913.2 723.8C916.9 726.0 921.7 731.2 924.3 734.9C926.9 738.6 929.5 743.5 929.0 745.9C928.5 748.2 924.3 749.5 921.1 749.0C917.9 748.5 913.4 744.9 910.0 742.8C906.6 740.7 903.4 737.7 900.6 736.4C897.9 735.1 894.8 736.5 893.5 734.9C892.2 733.3 892.6 728.9 892.7 727.0C892.8 725.1 894.0 724.3 894.3 723.8"/>
<path d="M716.7 858.8C716.2 853.9 715.0 838.2 713.7 829.2C712.4 820.2 710.1 812.7 708.8 804.5C707.5 796.3 705.9 785.4 705.8 779.8C705.7 774.2 707.1 771.2 708.3 770.9C709.4 770.6 711.0 773.0 712.7 777.8C714.4 782.6 717.4 790.9 718.7 799.5C720.0 808.1 720.4 819.5 720.6 829.2C720.8 839.0 720.2 847.1 720.0 858.0C719.8 868.9 719.2 885.1 719.6 894.5C720.0 903.9 720.6 906.5 722.6 914.2C724.6 921.9 730.0 936.5 731.5 940.9"/>
<path d="M714.7 841.0C712.6 842.3 704.7 846.4 701.9 849.0C699.1 851.6 698.2 854.2 697.9 856.8C697.6 859.4 697.8 860.5 699.9 864.8C702.0 869.1 707.7 876.0 710.8 882.6C713.9 889.2 716.4 897.9 718.7 904.3C721.0 910.7 722.3 915.0 724.6 921.1C726.9 927.2 731.2 937.6 732.5 940.9"/>
<path d="M681.0 892.0C682.6 890.6 683.3 887.5 690.7 883.6C698.1 879.7 714.9 872.7 725.3 868.4C735.7 864.1 743.8 860.5 753.0 858.0C762.2 855.5 774.6 853.3 780.6 853.2C786.6 853.1 788.5 854.5 789.0 857.3C789.5 860.1 787.1 864.5 783.4 869.8C779.7 875.1 771.9 883.7 766.8 889.2C761.7 894.7 757.6 898.4 753.0 903.0C748.4 907.6 745.0 912.2 739.2 916.8C733.4 921.4 725.8 926.8 718.4 930.7C711.0 934.6 697.2 938.0 694.9 940.3C692.6 942.6 701.1 943.8 704.6 944.5C708.1 945.2 713.1 946.4 715.6 944.5C718.1 942.6 719.1 935.2 719.8 933.4"/>
<path d="M681.0 892.0C682.1 892.4 681.4 896.6 687.7 894.4C694.0 892.2 707.8 883.8 719.0 878.6C730.2 873.4 743.8 866.9 755.0 863.0C766.2 859.1 780.8 856.3 786.0 855.0"/>
<path d="M565.0 995.0C580.8 985.5 639.2 950.5 660.0 938.0C680.8 925.5 680.9 925.5 690.0 920.0C699.1 914.5 706.5 910.0 714.7 905.3C722.9 900.5 730.4 896.8 739.4 891.5C748.4 886.2 758.9 879.3 769.0 873.7C779.1 868.1 788.2 863.3 800.0 858.0C811.8 852.7 828.7 846.2 840.0 842.0C851.3 837.8 856.2 834.9 868.0 832.5C879.8 830.1 900.0 827.5 910.8 827.5C921.6 827.5 930.3 830.1 932.9 832.2C935.5 834.3 932.9 837.2 926.6 840.1C920.3 843.0 903.9 847.2 894.9 849.6C885.9 852.0 871.5 852.5 872.8 854.4C874.1 856.2 892.5 857.8 902.8 860.7C913.1 863.6 925.5 867.6 934.5 871.8C943.5 876.0 953.2 882.0 956.6 886.0C960.0 890.0 958.7 892.6 955.0 895.5C951.3 898.4 944.5 901.3 934.5 903.4C924.5 905.5 906.1 907.5 895.0 908.2C883.9 908.9 874.6 906.4 868.0 907.4C861.4 908.4 859.4 912.0 855.4 914.5C851.4 917.0 850.9 920.0 844.3 922.4C837.7 924.8 823.2 927.5 815.8 928.7C808.4 929.9 805.9 929.8 800.0 929.5C794.1 929.2 787.3 928.5 780.6 927.0C773.9 925.5 765.9 923.8 759.9 920.6C753.9 917.4 748.4 912.4 744.7 907.8C741.0 903.2 739.2 898.3 737.8 893.0C736.4 887.7 735.9 881.5 736.4 876.0C736.9 870.5 737.7 865.8 740.5 860.1C743.3 854.5 748.1 847.3 753.0 842.1C757.9 836.9 763.0 834.0 770.0 829.0C777.0 824.0 787.5 816.8 795.0 812.0C802.5 807.2 809.2 802.7 815.0 800.0C820.8 797.3 825.2 796.0 830.0 796.0C834.8 796.0 840.0 797.5 844.0 800.0C848.0 802.5 850.8 806.4 854.0 811.0C857.2 815.6 860.4 821.6 863.3 827.5C866.2 833.4 870.2 839.6 871.2 846.5C872.2 853.4 872.2 861.8 869.6 868.6C867.0 875.5 861.7 881.5 855.4 887.6C849.1 893.7 838.2 901.3 831.6 905.0C825.0 908.7 819.8 909.6 815.8 909.7C811.8 909.8 810.4 905.9 807.9 905.8C805.4 905.7 802.1 908.5 801.0 909.0"/>
<path d="M778.9 856.0C778.6 859.6 778.0 871.3 777.0 877.7C776.0 884.1 775.2 888.6 773.0 894.5C770.8 900.4 767.7 908.4 764.0 913.0C760.3 917.6 755.1 920.0 751.0 922.0C746.9 924.0 741.2 924.6 739.2 925.1"/>
<path d="M779.3 897.5C780.2 899.8 782.7 909.5 784.8 911.3C786.9 913.1 790.1 911.7 791.7 908.5C793.3 905.3 793.6 892.8 794.5 891.9C795.4 891.0 795.8 900.2 797.2 903.0C798.6 905.8 800.7 908.0 802.8 908.5C804.9 909.0 807.1 906.5 810.0 906.0C812.9 905.5 818.3 905.6 820.0 905.5"/>
<path d="M732.2 923.7C735.7 921.4 749.8 906.4 753.0 909.9C756.2 913.4 753.2 940.6 751.6 944.5C750.0 948.4 746.3 938.0 743.3 933.4C740.3 928.8 735.2 919.6 733.6 916.8"/>
<path d="M872.8 854.4C869.9 854.1 861.2 852.5 855.4 852.8C849.6 853.0 838.3 854.8 838.0 855.9C837.7 857.0 848.0 859.4 853.8 859.1C859.6 858.9 869.6 855.2 872.8 854.4"/>
<path d="M286.5 760V450Q322 447 358.6 451.5V760" stroke-width="6" stroke="#666"/>
<path d="M408.5 757.5H405M408.5 757.5V560L411.7 554.7H429.8Q435 546 440.5 553.7H458.6L459.7 559L491.6 558L504.4 555.8L505.5 548.4Q512 543 512.9 539.8V521.7V539.8Q514 543 520.4 548.4L521.5 555.8L536.4 558L567.3 559L568.3 554.7H583Q587 549 592 554.7H613.1L618.4 560V757.5H625" stroke-width="6" stroke="#666"/>
<path d="M660.3 759.7L661.3 720.2L665.2 719.2L667.2 722.2H677.1V706.4L681 698.5L685 688.6L686 679.7L687 688.6L690.9 698.5L694.9 706.4L695.8 722.2H746.2L747.2 682.6L752.2 664.9L755.1 587.8L756.1 584.8L758.1 664.9L762 682.6L763 743.9H772V759.7" stroke-width="6" stroke="#666"/>
<path d="M803.5 747.8V613H815V609.8L833.5 601L861 595.7V747L859 759M803.5 747.8H812.8V759M826.5 575V604.3" stroke-width="6" stroke="#666"/>
<path d="M838 601V610M842 599V609M846 598V608M850 597V607M854 596.5V606M815 609.8H833.5V601" stroke-width="6" stroke="#666"/>
<path d="M895.8 758.6L892.7 749V663.7L898.2 657.4L903 671.6L906.1 657.4L910.8 671.6L914.8 657.4L921.1 671.6L925.9 657.4L930.6 671.6L934.6 657.4L937.7 671.6L940.9 657.4L944 663.7V749L940.9 758.6" stroke-width="6" stroke="#666"/>
 </g></svg>
</div>
<div class="a" style="left:809px;top:229px;width:50px;height:16px;background:#a3a3a3;border:1px solid #444"></div>
<div class="t" style="left:811px;top:232px;font-size:9.5px;color:#333">93,25%</div>
<div class="a" style="left:871px;top:236px;border-left:5px solid transparent;border-right:5px solid transparent;border-bottom:5px solid #999"></div>
<div class="a" style="left:894px;top:236px;width:101px;height:4px;background:#3a3a3a;border-radius:2px"></div>
<div class="a" style="left:937px;top:232px;width:9px;height:10px;background:#888;border-radius:3px 3px 1px 1px"></div>
<div class="a" style="left:1003px;top:233px;border-left:9px solid transparent;border-right:9px solid transparent;border-bottom:8px solid #9a9a9a"></div>
<div class="a" style="left:806px;top:249px;width:242px;height:8px;background:#4a4a4a"></div>
<div class="a" style="left:916px;top:251px;width:21px;height:3px;border-left:1px dotted #222;background:repeating-linear-gradient(90deg,#222 0 1px,transparent 1px 3px)"></div>

<!-- LAYERS floating -->
<div class="a" style="left:1047px;top:460px;width:250px;height:230px;background:#535353;box-shadow:0 1px 3px #222"></div>
<div class="a" style="left:1047px;top:460px;width:250px;height:14px;background:#3c3c3c"></div>
<svg class="a" style="left:1267px;top:465px" width="10" height="5"><path d="M5 0L0 2.5L5 5ZM10 0L5 2.5L10 5Z" fill="#aaa"/></svg>
<svg class="a" style="left:1284.5px;top:463.5px" width="7.0" height="7.0"><path d="M1 1L6.0 6.0M6.0 1L1 6.0" stroke="#bbb" stroke-width="1.2"/></svg>
<div class="a" style="left:1047px;top:474px;width:250px;height:17px;background:#404040"></div>
<div class="a" style="left:1047px;top:474px;width:46px;height:17px;background:#535353"></div>
<div class="t ptab" style="left:1056px;top:478px;font-size:10px;color:#d8d8d8">Layers</div>
<div class="t ptab" style="left:1100px;top:478px;font-size:10px;color:#8e8e8e">Artboards</div>
<div class="a" style="left:1156px;top:476px;width:1px;height:15px;background:#363636"></div>
<div class="a" style="left:1280px;top:481px;border-left:3px solid transparent;border-right:3px solid transparent;border-top:4px solid #aaa"></div>
<div class="a" style="left:1285px;top:479px;width:8px;height:1.5px;background:#aaa;box-shadow:0 3px 0 #aaa,0 6px 0 #aaa"></div>
<div class="a" style="left:1053px;top:497px;width:239px;height:170px;border:1px solid #444;background:#535353"></div>
<div class="a" style="left:1054px;top:498px;width:237px;height:22px;background:#5d6676"></div>
<div class="a" style="left:1076px;top:498px;width:1px;height:22px;background:#4a5262"></div>
<div class="a" style="left:1097px;top:498px;width:1px;height:22px;background:#4a5262"></div>
<div class="a" style="left:1099px;top:499px;width:5px;height:20px;background:#4a80f0"></div>
<div class="a" style="left:1254px;top:498px;width:1px;height:22px;background:#4a5262"></div>
<div class="a" style="left:1058px;top:504px;width:13px;height:9px;border:1.5px solid #b8bcc4;border-radius:50%"></div>
<div class="a" style="left:1062px;top:506.5px;width:5px;height:4px;background:#9aa;border-radius:50%"></div>
<div class="a" style="left:1109px;top:505px;border-top:4.5px solid transparent;border-bottom:4.5px solid transparent;border-left:6px solid #e6e6e6"></div>
<div class="a" style="left:1126px;top:500px;width:18px;height:18px;background:#f4f4f4;border:1px solid #222"></div>
<svg class="a" style="left:1127px;top:501px" width="16" height="16"><path d="M3 4L8 3M2 7H6M9 6L14 8M3 10L13 10M8 12L14 14M6 13L10 9" stroke="#222" stroke-width="1.3" fill="none"/></svg>
<div class="t" style="left:1150px;top:504px;font-size:10px;color:#e6e6e6">Layer 1</div>
<div class="a" style="left:1260px;top:504px;width:10px;height:10px;border:1.2px solid #c8c8c8;border-radius:50%"></div>
<div class="a" style="left:1285px;top:499px;border-left:6px solid transparent;border-top:6px solid #e8e8e8"></div>
<div class="t" style="left:1054px;top:667px;font-size:10px;color:#d0d0d0">1 Layer</div>
<div class="a" style="left:1152px;top:666px;width:8px;height:8px;border:1.3px solid #666;border-radius:50%"></div>
<div class="a" style="left:1176px;top:666px;width:10px;height:9px;border:1.5px solid #c8c8c8;background:#555"></div>
<div class="a" style="left:1180px;top:670px;width:8px;height:7px;background:#aaa;opacity:.6"></div>
<svg class="a" style="left:1202px;top:665px" width="16" height="14"><path d="M8 3V7H2M4 5L2 7L4 9" stroke="#ccc" stroke-width="1.5" fill="none"/><rect x="10" y="2" width="4" height="11" fill="#ccc"/></svg>
<div class="a" style="left:1230px;top:666px;width:10px;height:12px;background:#ccc;clip-path:polygon(30% 0,100% 0,100% 100%,0 100%,0 30%)"></div>
<div class="a" style="left:1257px;top:667px;width:10px;height:11px;border:1.2px solid #6a6a6a;border-top-width:2px"></div>
<div class="a" style="left:1047px;top:682px;width:250px;height:8px;background:#484848"></div>
<div class="a" style="left:1162px;top:684px;width:21px;height:3px;background:repeating-linear-gradient(90deg,#222 0 1px,transparent 1px 3px)"></div>

</body></html>
